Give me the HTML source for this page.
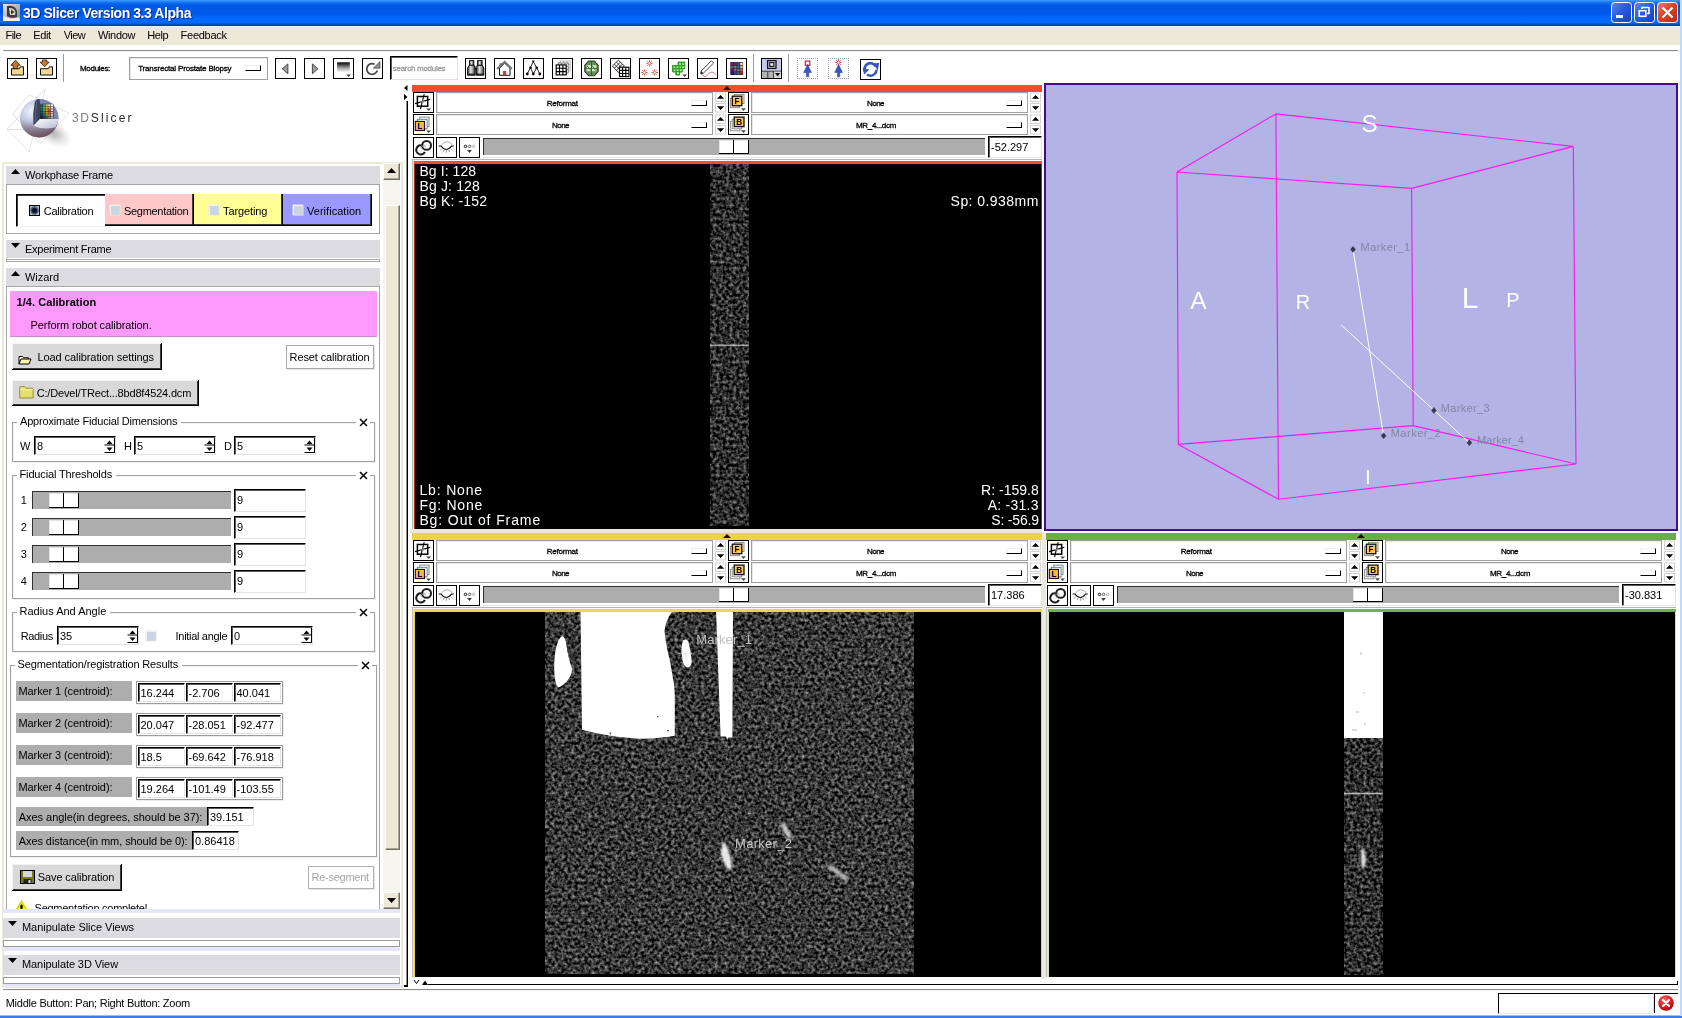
<!DOCTYPE html>
<html><head><meta charset="utf-8"><title>3D Slicer Version 3.3 Alpha</title>
<style>
html,body{margin:0;padding:0;}
body{width:1682px;height:1018px;overflow:hidden;background:#fff;position:relative;font-family:"Liberation Sans", sans-serif;font-size:11px;}
#root{position:absolute;left:0;top:0;width:1682px;height:1018px;overflow:hidden;will-change:transform;}
.a{position:absolute;box-sizing:content-box;}
.t{position:absolute;white-space:pre;font-family:"Liberation Sans", sans-serif;}
.s8{-webkit-text-stroke:0.3px currentColor;}
svg{display:block;overflow:visible}
#title{background:linear-gradient(to bottom,#3f9dff 0px,#2f8efa 1px,#1474ef 2.5px,#0463e5 4px,#0058e6 6px,#0056e5 13px,#005cf0 15px,#0265fa 17px,#066aff 19px,#0566fb 23px,#0055dd 24px,#003db2 25px,#0037a6 26px);}
.b21{width:19px;height:19px;border:1px solid #000;background:#fff;}
.sk{border:1px solid;border-color:#000 #e2e2e2 #e2e2e2 #000;box-shadow:inset 1px 1px 0 #5a5a5a;}
.rb{border-right:1px solid #000;border-bottom:1px solid #000;padding:0 1px 1px 0;box-shadow:inset 1px 1px 0 #f4f4f4, inset -1px -1px 0 #3c3c3c;}
.fs{border:1px solid #a2a2a2;box-shadow:1px 1px 0 #f0f0f0, inset 1px 1px 0 #f4f4f4;}
.om{background:#fff;border:1px solid #a0a0a0;box-shadow:inset 1px 1px 0 #e8e8e8;}
.sbb{width:15px;height:15px;background:#ece9d8;border:1px solid;border-color:#fff #716f64 #716f64 #fff;box-shadow:inset -1px -1px 0 #aca899;}
</style></head>
<body>
<div id="root">
<div class="a" id="title" style="left:0;top:0;width:1680px;height:26px"></div>
<svg class="a" style="left:3px;top:4px" width="17" height="17" viewBox="0 0 17 17"><defs><linearGradient id="ti" x1="0" y1="0" x2="1" y2="1"><stop offset="0" stop-color="#e8e8e8"/><stop offset="1" stop-color="#8a8478"/></linearGradient></defs><rect x="0" y="0" width="17" height="17" fill="url(#ti)"/><path d="M4 2 Q12 1 14 7 L14 13 Q8 15 4 12 Z" fill="#3a3a44"/><path d="M6 4 Q11 3.5 12.5 8 L12 11 L7 11 Z" fill="#d9d4c4"/><path d="M8 5.5 L11.5 8 L8 10.5 Z" fill="#403a30"/><path d="M0 11 Q6 17 16 13 L17 17 H0 Z" fill="#f4f2ea"/></svg>
<span id="t1" class="t" style="left:23.0px;top:4.35px;font-size:14px;line-height:18px;font-weight:bold;color:#fff;letter-spacing:-0.445px;text-shadow:1px 1px 0 #0a2a8a;">3D Slicer Version 3.3 Alpha</span>
<div class="a" style="left:1611px;top:2px;width:19px;height:19px;border:1px solid #fff;border-radius:3.5px;background:linear-gradient(135deg,#5a86ee 0%,#2c5be0 45%,#1a3fc0 100%)"></div>
<div class="a" style="left:1634px;top:2px;width:19px;height:19px;border:1px solid #fff;border-radius:3.5px;background:linear-gradient(135deg,#5a86ee 0%,#2c5be0 45%,#1a3fc0 100%)"></div>
<div class="a" style="left:1657px;top:2px;width:19px;height:19px;border:1px solid #fff;border-radius:3.5px;background:linear-gradient(135deg,#f08060 0%,#d8432a 45%,#b82a10 100%)"></div>
<svg class="a" style="left:1611px;top:2px;" width="21" height="21" viewBox="0 0 21 21"><rect x="5" y="13" width="7" height="3" fill="#fff"/></svg>
<svg class="a" style="left:1634px;top:2px;" width="21" height="21" viewBox="0 0 21 21"><path d="M8 7 V5.5 H15 V11.5 H13" stroke="#fff" stroke-width="1.6" fill="none"/><rect x="5.2" y="8.7" width="6.6" height="5.6" stroke="#fff" stroke-width="1.6" fill="none"/></svg>
<svg class="a" style="left:1657px;top:2px;" width="21" height="21" viewBox="0 0 21 21"><path d="M5.5 5.5 L15.5 15.5 M15.5 5.5 L5.5 15.5" stroke="#fff" stroke-width="2.2" fill="none"/></svg>
<div class="a" style="left:1680px;top:0px;width:2px;height:1018px;background:#c2d9f8"></div>
<div class="a" style="left:0px;top:1016px;width:1682px;height:2px;background:#3b7ce6"></div>
<div class="a" style="left:0px;top:1015px;width:1680px;height:1px;background:#9dbdf0"></div>
<div class="a" style="left:0px;top:26px;width:1680px;height:19px;background:#ece9d8"></div>
<div class="a" style="left:0px;top:26px;width:1680px;height:1px;background:#f3f4f8"></div>
<span id="t2" class="t" style="left:5.5px;top:28.29px;font-size:11px;line-height:15px;letter-spacing:-0.534px;">File</span>
<span id="t3" class="t" style="left:33.3px;top:28.29px;font-size:11px;line-height:15px;letter-spacing:-0.367px;">Edit</span>
<span id="t4" class="t" style="left:63.8px;top:28.29px;font-size:11px;line-height:15px;letter-spacing:-0.564px;">View</span>
<span id="t5" class="t" style="left:97.9px;top:28.29px;font-size:11px;line-height:15px;letter-spacing:-0.304px;">Window</span>
<span id="t6" class="t" style="left:147.3px;top:28.29px;font-size:11px;line-height:15px;letter-spacing:-0.456px;">Help</span>
<span id="t7" class="t" style="left:180.6px;top:28.29px;font-size:11px;line-height:15px;letter-spacing:-0.277px;">Feedback</span>
<div class="a" style="left:3px;top:50px;width:1675px;height:1px;background:#8a8a8a"></div>
<div class="a" style="left:3px;top:51px;width:1675px;height:1px;background:#f4f4f4"></div>
<div class="a b21" style="left:7px;top:58px;"><svg width="19" height="19" viewBox="0 0 19 19"><path d="M3.5 9.7 H11.3 L12.3 7.8 H15.5 V16 H3.5 Z" fill="#f1d88e" stroke="#111" stroke-width="1"/><path d="M7.5 1.2 L12.2 6.2 H9.7 V9.6 H5.3 V6.2 H2.8 Z" fill="#c8782e" stroke="#2a1600" stroke-width=".8"/></svg></div>
<div class="a b21" style="left:36px;top:58px;"><svg width="19" height="19" viewBox="0 0 19 19"><path d="M3.5 9.7 H11.3 L12.3 7.8 H15.5 V16 H3.5 Z" fill="#f1d88e" stroke="#111" stroke-width="1"/><path d="M5.4 1 H9.8 V3.2 H12.1 L7.6 7.8 L3.2 3.2 H5.4 Z" fill="#d8782a" stroke="#2a1600" stroke-width=".8"/></svg></div>
<div class="a" style="left:63px;top:54px;width:1px;height:28px;background:#9a9a9a"></div>
<span id="t8" class="t s8" style="left:80.0px;top:62.93px;font-size:8px;line-height:12px;letter-spacing:-0.309px;">Modules:</span>
<div class="a om" style="left:129px;top:57px;width:137px;height:21px"></div>
<span id="t9" class="t s8" style="left:138.2px;top:62.93px;font-size:8px;line-height:12px;letter-spacing:-0.177px;">Transrectal Prostate Biopsy</span>
<div class="a" style="left:245px;top:65px;width:14px;height:4px;background:#fff;border-right:1px solid #000;border-bottom:1px solid #000;border-top:1px solid #eee;border-left:1px solid #eee"></div>
<div class="a b21" style="left:275px;top:58px;"><svg width="19" height="19" viewBox="0 0 19 19"><path d="M11.9 4.9 V14.7 L6.2 9.8 Z" fill="#9c9c9c" stroke="#3c3c3c" stroke-width=".9"/></svg></div>
<div class="a b21" style="left:304px;top:58px;"><svg width="19" height="19" viewBox="0 0 19 19"><path d="M7.4 4.9 V14.7 L12.9 9.8 Z" fill="#9c9c9c" stroke="#3c3c3c" stroke-width=".9"/></svg></div>
<div class="a b21" style="left:333px;top:58px;"><svg width="19" height="19" viewBox="0 0 19 19"><defs><linearGradient id="gh" x1="0" y1="0" x2="0" y2="1"><stop offset="0" stop-color="#000"/><stop offset=".18" stop-color="#333"/><stop offset=".6" stop-color="#aaa"/><stop offset="1" stop-color="#fcfcfc"/></linearGradient></defs><rect x="3.1" y="3.3" width="12.7" height="9.9" fill="url(#gh)"/><path d="M12.2 15.4 H17 L14.6 18 Z" fill="#444"/></svg></div>
<div class="a b21" style="left:362px;top:58px;"><svg width="19" height="19" viewBox="0 0 19 19"><path d="M14.3 11.6 A5.4 5.4 0 1 1 11.6 5.2" fill="none" stroke="#4a4a4a" stroke-width="1.7"/><path d="M10.3 9.2 L17 2.5 V9.2 Z" fill="#8e8e8e" stroke="#444" stroke-width=".7"/></svg></div>
<div class="a sk" style="left:390px;top:56px;width:66px;height:22px;background:#fff"></div>
<span id="t10" class="t s8" style="left:392.8px;top:62.93px;font-size:8px;line-height:12px;color:#9a9a9a;letter-spacing:-0.285px;">search modules</span>
<div class="a b21" style="left:465px;top:58px;"><svg width="19" height="19" viewBox="0 0 19 19"><defs><linearGradient id="gb" x1="0" y1="0" x2="1" y2="0"><stop offset="0" stop-color="#333"/><stop offset=".4" stop-color="#e2e2e2"/><stop offset=".7" stop-color="#999"/><stop offset="1" stop-color="#2a2a2a"/></linearGradient></defs><rect x="3.5" y="1.6" width="4.3" height="4.7" fill="url(#gb)" stroke="#000" stroke-width=".9"/><rect x="11.6" y="1.6" width="4.5" height="4.7" fill="url(#gb)" stroke="#000" stroke-width=".9"/><path d="M3.2 6.3 H8.1 L9.2 9 V16.2 H1.6 V9 Z" fill="url(#gb)" stroke="#000" stroke-width=".9"/><path d="M11.3 6.3 H16.4 L17.8 9 V16.2 H10.4 V9 Z" fill="url(#gb)" stroke="#000" stroke-width=".9"/><rect x="8.6" y="7.2" width="2.4" height="3.6" fill="#111"/><circle cx="9.8" cy="8" r=".8" fill="#ccc"/><rect x="1.6" y="14.6" width="7.6" height="1.6" fill="#222"/><rect x="10.4" y="14.6" width="7.4" height="1.6" fill="#222"/></svg></div>
<div class="a b21" style="left:494px;top:58px;"><svg width="19" height="19" viewBox="0 0 19 19"><rect x="4.5" y="4.4" width="2.4" height="3.4" fill="#666"/><path d="M4.5 9 V16.3 H15 V9 L9.7 4.2 Z" fill="#fff" stroke="#111" stroke-width="1"/><path d="M2.1 10.1 L9.6 3 L16.9 10.1" fill="none" stroke="#747474" stroke-width="2.1"/><rect x="7.9" y="12" width="3.3" height="4.3" fill="#b8483a"/></svg></div>
<div class="a b21" style="left:523px;top:58px;"><svg width="19" height="19" viewBox="0 0 19 19"><path d="M9.3 2.5 L3.3 14.9 M9.3 2.5 L15.8 14.9 M6.5 8.7 L9.3 14.9 M12.7 8.7 L9.3 14.9" fill="none" stroke="#000" stroke-width=".85"/><g fill="#1c0404"><path d="M7.9 1.6 H10.7 L9.3 3.9 Z"/><circle cx="6.5" cy="8.7" r="1.3"/><circle cx="12.7" cy="8.7" r="1.3"/><circle cx="3.3" cy="15" r="1.4"/><circle cx="9.3" cy="15" r="1.4"/><circle cx="15.8" cy="15" r="1.4"/></g></svg></div>
<div class="a b21" style="left:552px;top:58px;"><svg width="19" height="19" viewBox="0 0 19 19"><g fill="none" stroke="#a8a8a8" stroke-width=".8"><rect x="7.2" y="2" width="10" height="10"/><path d="M10.5 2 V12 M13.9 2 V12 M7.2 5.3 H17.2 M7.2 8.7 H17.2"/></g><g fill="#fff" stroke="#6e6e6e" stroke-width=".9"><rect x="5.2" y="4" width="10" height="10"/></g><path d="M8.5 4 V14 M11.9 4 V14 M5.2 7.3 H15.2 M5.2 10.7 H15.2" stroke="#6e6e6e" stroke-width=".8"/><g fill="#fff" stroke="#000" stroke-width="1.15"><rect x="3.2" y="5.9" width="10" height="10"/><path d="M6.5 5.9 V15.9 M9.9 5.9 V15.9 M3.2 9.2 H13.2 M3.2 12.6 H13.2"/></g></svg></div>
<div class="a b21" style="left:581px;top:58px;"><svg width="19" height="19" viewBox="0 0 19 19"><path d="M6.6 2 H12.3 L16.1 6.2 V12.6 L12.3 16.8 H6.6 L2.8 12.6 V6.2 Z" fill="#6c8a62" stroke="#24401e" stroke-width="1.1"/><rect x="4.6" y="6.2" width="4.5" height="6" fill="#cdeec2"/><rect x="9.9" y="6.2" width="4.5" height="6" fill="#cdeec2"/><path d="M9.5 2 V16.8 M2.8 9.4 H16.1 M5 6.7 L9 11.7 M10 6.7 L14 11.7" fill="none" stroke="#2c5424" stroke-width=".8"/></svg></div>
<div class="a b21" style="left:610px;top:58px;"><svg width="19" height="19" viewBox="0 0 19 19"><path d="M7.4 1.1 L13.3 7 L7.4 13.5 L1.4 7 Z" fill="#fff" stroke="#000" stroke-width=".8"/><path d="M5.4 3.1 L11.3 9.2 M3.4 5.1 L9.4 11.3 M9.4 3.1 L3.4 9.2 M11.4 5 L5.4 11.3" stroke="#000" stroke-width=".7"/><g fill="#fff" stroke="#000" stroke-width="1.15"><rect x="8.5" y="8.2" width="9.4" height="9.4"/><path d="M11.6 8.2 V17.6 M14.8 8.2 V17.6 M8.5 11.3 H17.9 M8.5 14.5 H17.9"/></g></svg></div>
<div class="a b21" style="left:639px;top:58px;"><svg width="19" height="19" viewBox="0 0 19 19"><path d="M6.2 4.4 H8.5 M10.5 4.4 H12.8 M9.5 1.1 V3.4 M9.5 5.4 V7.7 M7.2 2.1 L8.8 3.7 M10.2 5.1 L11.8 6.7 M11.8 2.1 L10.2 3.7 M8.8 5.1 L7.2 6.7" stroke="#c8402e" stroke-width="0.8" fill="none"/><path d="M1.1 13.5 H3.4 M5.4 13.5 H7.7 M4.4 10.2 V12.5 M4.4 14.5 V16.8 M2.1 11.2 L3.7 12.8 M5.1 14.2 L6.7 15.8 M6.7 11.2 L5.1 12.8 M3.7 14.2 L2.1 15.8" stroke="#c8402e" stroke-width="0.8" fill="none"/><path d="M11.4 13.5 H13.7 M15.7 13.5 H18.0 M14.7 10.2 V12.5 M14.7 14.5 V16.8 M12.4 11.2 L14.0 12.8 M15.4 14.2 L17.0 15.8 M17.0 11.2 L15.4 12.8 M14.0 14.2 L12.4 15.8" stroke="#c8402e" stroke-width="0.8" fill="none"/></svg></div>
<div class="a b21" style="left:668px;top:58px;"><svg width="19" height="19" viewBox="0 0 19 19"><path d="M9 3 H15.6 V9.5 H13 V13 H10.4 V16 H6.8 V12.8 H3.4 V6.4 H9 Z" fill="#4cb83e" stroke="#2a8a22" stroke-width=".8"/><rect x="9.6" y="3.6" width="3.1" height="3.1" fill="#9cf08c" stroke="#2f9a26" stroke-width="1"/><rect x="12.6" y="3.6" width="3.1" height="3.1" fill="#9cf08c" stroke="#2f9a26" stroke-width="1"/><rect x="4" y="6.8" width="3.1" height="3.1" fill="#9cf08c" stroke="#2f9a26" stroke-width="1"/><rect x="7" y="6.8" width="3.1" height="3.1" fill="#9cf08c" stroke="#2f9a26" stroke-width="1"/><rect x="10" y="6.8" width="3.1" height="3.1" fill="#9cf08c" stroke="#2f9a26" stroke-width="1"/><rect x="12.6" y="6.6" width="3.1" height="3.1" fill="#9cf08c" stroke="#2f9a26" stroke-width="1"/><rect x="4.2" y="9.7" width="3.1" height="3.1" fill="#9cf08c" stroke="#2f9a26" stroke-width="1"/><rect x="7.2" y="9.7" width="3.1" height="3.1" fill="#9cf08c" stroke="#2f9a26" stroke-width="1"/><rect x="10.2" y="9.7" width="3.1" height="3.1" fill="#9cf08c" stroke="#2f9a26" stroke-width="1"/><rect x="7.4" y="12.6" width="3.1" height="3.1" fill="#9cf08c" stroke="#2f9a26" stroke-width="1"/><path d="M13.4 15.4 H18.1 L15.7 18 Z" fill="#4a3c5c"/></svg></div>
<div class="a b21" style="left:697px;top:58px;"><svg width="19" height="19" viewBox="0 0 19 19"><path d="M3.2 12 L13.4 1.8 L15.6 4 L5.4 14.2 L2.6 14.8 Z" fill="#fff" stroke="#333" stroke-width=".9"/><path d="M2.6 14.8 L3.2 12 L5.4 14.2 Z" fill="#222"/><path d="M3.4 14.6 C5.5 18.5 8 18 10 15.4 S14.5 12 17.7 15.4" fill="none" stroke="#c4485a" stroke-width=".8"/></svg></div>
<div class="a b21" style="left:726px;top:58px;"><svg width="19" height="19" viewBox="0 0 19 19"><rect x="3.3" y="3.1" width="12.8" height="12.9" fill="#2a1e3c"/><rect x="3.9" y="3.7" width="2.5" height="2.5" fill="#7a2030"/><rect x="7.0" y="3.7" width="2.5" height="2.5" fill="#483070"/><rect x="10.1" y="3.7" width="2.5" height="2.5" fill="#5a4a8a"/><rect x="13.2" y="3.7" width="2.5" height="2.5" fill="#e8e4a0"/><rect x="3.9" y="6.8" width="2.5" height="2.5" fill="#a04088"/><rect x="7.0" y="6.8" width="2.5" height="2.5" fill="#40a050"/><rect x="10.1" y="6.8" width="2.5" height="2.5" fill="#3a60c0"/><rect x="13.2" y="6.8" width="2.5" height="2.5" fill="#d8b870"/><rect x="3.9" y="9.9" width="2.5" height="2.5" fill="#3a2a90"/><rect x="7.0" y="9.9" width="2.5" height="2.5" fill="#b84890"/><rect x="10.1" y="9.9" width="2.5" height="2.5" fill="#389858"/><rect x="13.2" y="9.9" width="2.5" height="2.5" fill="#c86858"/><rect x="3.9" y="13.0" width="2.5" height="2.5" fill="#282060"/><rect x="7.0" y="13.0" width="2.5" height="2.5" fill="#4838a0"/><rect x="10.1" y="13.0" width="2.5" height="2.5" fill="#2a7040"/><rect x="13.2" y="13.0" width="2.5" height="2.5" fill="#b02838"/></svg></div>
<div class="a" style="left:753px;top:54px;width:1px;height:28px;background:#9a9a9a"></div>
<div class="a b21" style="left:761px;top:58px;background:#c4c8e6;"><svg width="19" height="19" viewBox="0 0 19 19"><rect x="0" y="0" width="19" height="19" fill="#c8c8ea"/><rect x="5.6" y="1.6" width="8.4" height="7.8" fill="#d6d6f0" stroke="#111" stroke-width="1.3"/><rect x="7.7" y="3.6" width="4.2" height="3.8" fill="#e6e6f6" stroke="#111" stroke-width="1.1"/><rect x="0" y="12.2" width="19" height="6.8" fill="#b4b4b4"/><path d="M0 12.2 H19 M5.8 12.2 V19 M11.6 12.2 V19" stroke="#3c3c3c" stroke-width="1"/><rect x="12.1" y="12.7" width="6.9" height="6.3" fill="#d8d8d8"/><path d="M13 14 H18.2 L15.6 17.4 Z" fill="#111"/></svg></div>
<div class="a" style="left:788px;top:54px;width:1px;height:28px;background:#9a9a9a"></div>
<div class="a b21" style="left:797px;top:58px;border:1px dotted #98a0b4;"><svg width="19" height="19" viewBox="0 0 19 19"><rect x="7.3" y="2.1" width="4.6" height="4.2" fill="#fff" stroke="#a8202e" stroke-width="1.1"/><path d="M9.6 5.4 L13.5 13.5 H10.8 V17.8 H8.4 V13.5 H5.7 Z" fill="#3a56c4" stroke="#2a3c9c" stroke-width=".5"/></svg></div>
<div class="a b21" style="left:828px;top:58px;border:1px dotted #98a0b4;"><svg width="19" height="19" viewBox="0 0 19 19"><path d="M6.4 3.6 H8.6 M10.6 3.6 H12.8 M9.6 0.4 V2.6 M9.6 4.6 V6.8 M7.3 1.3 L8.9 2.9 M10.3 4.3 L11.9 5.9 M11.9 1.3 L10.3 2.9 M8.9 4.3 L7.3 5.9" stroke="#d02828" stroke-width="0.9" fill="none"/><path d="M9.6 5.4 L13.5 13.5 H10.8 V17.8 H8.4 V13.5 H5.7 Z" fill="#3a56c4" stroke="#2a3c9c" stroke-width=".5"/></svg></div>
<div class="a b21" style="left:860px;top:59px;"><svg width="19" height="19" viewBox="0 0 19 19"><path d="M4.2 11.6 A5.8 5.8 0 0 1 14.6 6.4" fill="none" stroke="#3558be" stroke-width="2.8"/><path d="M11.6 3.2 L18.2 3 L16.8 10.2 Z" fill="#3558be"/><path d="M15.4 9.6 A5.8 5.8 0 0 1 6 14.4" fill="none" stroke="#3558be" stroke-width="2.4"/><path d="M1.6 8.2 L8.4 9.6 L3.2 14.6 Z" fill="#3558be"/></svg></div>
<svg class="a" style="left:0px;top:84px" width="140" height="74" viewBox="0 0 140 74"><defs><radialGradient id="lg1" cx=".3" cy=".32" r=".8"><stop offset="0" stop-color="#f2f4fb"/><stop offset=".35" stop-color="#c2cae4"/><stop offset=".7" stop-color="#8c94b8"/><stop offset="1" stop-color="#6e5e76"/></radialGradient><linearGradient id="lg4" x1="0" y1="0" x2="0" y2="1"><stop offset=".55" stop-color="#805858" stop-opacity="0"/><stop offset="1" stop-color="#6a4444" stop-opacity=".75"/></linearGradient><radialGradient id="lg2" cx=".5" cy=".5" r=".5"><stop offset="0" stop-color="#000" stop-opacity=".30"/><stop offset=".6" stop-color="#000" stop-opacity=".10"/><stop offset="1" stop-color="#000" stop-opacity="0"/></radialGradient><linearGradient id="lg3" x1="0" y1="0" x2="1" y2="1"><stop offset="0" stop-color="#ffffff"/><stop offset="1" stop-color="#b4bcd4"/></linearGradient></defs><ellipse cx="53" cy="49" rx="20" ry="12" fill="url(#lg2)" transform="rotate(30 53 49)"/><path d="M7 45.5 L45.4 4.6 L29 67.5 Z M12.5 30 L29 11 L69 29 L40.5 60 Z M7 45.5 H58" fill="none" stroke="#d4d4d8" stroke-width=".7"/><circle cx="39.2" cy="34.2" r="19.2" fill="url(#lg1)"/><circle cx="39.2" cy="34.2" r="19.2" fill="url(#lg4)"/><path d="M38.5 15 A19.2 19.2 0 0 1 58.4 34.6 L53.4 35 L40 35 L40 20 Z" fill="#7d86ae"/><path d="M39.6 15 Q36 14.6 34.6 19 Q32.4 30 33.4 41.8 L40 35.2 L40 19.5 Z" fill="#3a445e"/><path d="M36.8 17.5 Q35 29 35.8 38.4" fill="none" stroke="#586482" stroke-width="1.1"/><path d="M33.4 41.8 L40 35 H58.4 Q58 39.5 55.6 43.2 Q44 46.5 33.4 41.8 Z" fill="url(#lg3)"/><rect x="40" y="19.8" width="13.4" height="15.2" fill="#16202c"/><rect x="40.4" y="20.2" width="2.2" height="2.05" fill="#3a6a78"/><rect x="43.0" y="20.2" width="2.2" height="2.05" fill="#5a9a70"/><rect x="45.6" y="20.2" width="2.2" height="2.05" fill="#c8d080"/><rect x="48.2" y="20.2" width="2.2" height="2.05" fill="#f0e8d0"/><rect x="50.8" y="20.2" width="2.2" height="2.05" fill="#ffffff"/><rect x="40.4" y="22.6" width="2.2" height="2.05" fill="#2a8a70"/><rect x="43.0" y="22.6" width="2.2" height="2.05" fill="#78b848"/><rect x="45.6" y="22.6" width="2.2" height="2.05" fill="#e8c838"/><rect x="48.2" y="22.6" width="2.2" height="2.05" fill="#f0a840"/><rect x="50.8" y="22.6" width="2.2" height="2.05" fill="#f4e8e0"/><rect x="40.4" y="25.1" width="2.2" height="2.05" fill="#1a7858"/><rect x="43.0" y="25.1" width="2.2" height="2.05" fill="#58a838"/><rect x="45.6" y="25.1" width="2.2" height="2.05" fill="#f09020"/><rect x="48.2" y="25.1" width="2.2" height="2.05" fill="#e85028"/><rect x="50.8" y="25.1" width="2.2" height="2.05" fill="#f0c8c0"/><rect x="40.4" y="27.6" width="2.2" height="2.05" fill="#205860"/><rect x="43.0" y="27.6" width="2.2" height="2.05" fill="#388848"/><rect x="45.6" y="27.6" width="2.2" height="2.05" fill="#d8a828"/><rect x="48.2" y="27.6" width="2.2" height="2.05" fill="#e06030"/><rect x="50.8" y="27.6" width="2.2" height="2.05" fill="#e8b0a8"/><rect x="40.4" y="30.0" width="2.2" height="2.05" fill="#283858"/><rect x="43.0" y="30.0" width="2.2" height="2.05" fill="#2a6858"/><rect x="45.6" y="30.0" width="2.2" height="2.05" fill="#88a048"/><rect x="48.2" y="30.0" width="2.2" height="2.05" fill="#c87848"/><rect x="50.8" y="30.0" width="2.2" height="2.05" fill="#d8b8b8"/><rect x="40.4" y="32.5" width="2.2" height="2.05" fill="#202848"/><rect x="43.0" y="32.5" width="2.2" height="2.05" fill="#284858"/><rect x="45.6" y="32.5" width="2.2" height="2.05" fill="#507858"/><rect x="48.2" y="32.5" width="2.2" height="2.05" fill="#a08868"/><rect x="50.8" y="32.5" width="2.2" height="2.05" fill="#c8c0c8"/></svg>
<span id="t11" class="t" style="left:72.0px;top:110.24px;font-size:12px;line-height:16px;color:#7c7c7c;letter-spacing:1.628px;">3D</span>
<span id="t12" class="t" style="left:90.8px;top:110.24px;font-size:12px;line-height:16px;color:#2a2a2a;letter-spacing:2.131px;">Slicer</span>
<div class="a" style="left:2px;top:162px;width:401px;height:826px;border:2px solid #ece9d8;box-sizing:border-box"></div>
<div class="a" style="left:6px;top:166px;width:374px;height:18px;background:#dcdce0"></div>
<svg class="a" style="left:11px;top:169px;" width="9" height="5" viewBox="0 0 9 5"><path d="M0 5 L4.5 0 L9 5 Z" fill="#000"/></svg>
<span id="t13" class="t" style="left:25.0px;top:168.19px;font-size:11px;line-height:15px;letter-spacing:-0.152px;">Workphase Frame</span>
<div class="a" style="left:6px;top:184px;width:374px;height:50px;border:1px solid #a6a6a6;box-sizing:border-box"></div>
<div class="a" style="left:16px;top:194px;width:87px;height:30px;background:#fff;border-top:1px solid #000;border-left:1px solid #000;border-right:1px solid #f0f0f0;border-bottom:1px solid #f0f0f0;padding:1px 0 0 1px;box-shadow:inset 1px 1px 0 #3c3c3c;box-sizing:content-box"></div>
<div class="a" style="left:29px;top:205px;width:9px;height:9px;border:1px solid #000;background:radial-gradient(circle,#000 0,#10203a 35%,#9db0c8 75%,#dfe6ee 100%)"></div>
<span id="t14" class="t" style="left:43.8px;top:204.39px;font-size:11px;line-height:15px;letter-spacing:-0.281px;">Calibration</span>
<div class="a" style="left:105px;top:194px;width:88px;height:31px;background:#ffc8c8;border-right:1px solid #000;border-bottom:1px solid #000;box-shadow:inset -1px -1px 0 #3c3c3c"></div>
<div class="a" style="left:109.5px;top:204.5px;width:8px;height:8px;border:1px solid #f2f2f2;border-right-color:#d8d8d8;border-bottom-color:#d8d8d8;background:#c9d5e3;box-shadow:0 0 0 0.5px #e8e8e8"></div>
<span id="t15" class="t" style="left:124.0px;top:203.79px;font-size:11px;line-height:15px;letter-spacing:-0.299px;">Segmentation</span>
<div class="a" style="left:194px;top:194px;width:88px;height:31px;background:#ffff96;border-right:1px solid #000;border-bottom:1px solid #000;box-shadow:inset -1px -1px 0 #3c3c3c"></div>
<div class="a" style="left:208.5px;top:204.5px;width:8px;height:8px;border:1px solid #f2f2f2;border-right-color:#d8d8d8;border-bottom-color:#d8d8d8;background:#c9d5e3;box-shadow:0 0 0 0.5px #e8e8e8"></div>
<span id="t16" class="t" style="left:223.0px;top:203.79px;font-size:11px;line-height:15px;letter-spacing:-0.096px;">Targeting</span>
<div class="a" style="left:283px;top:194px;width:88px;height:31px;background:#9999ff;border-right:1px solid #000;border-bottom:1px solid #000;box-shadow:inset -1px -1px 0 #3c3c3c"></div>
<div class="a" style="left:292.5px;top:204.5px;width:8px;height:8px;border:1px solid #f2f2f2;border-right-color:#d8d8d8;border-bottom-color:#d8d8d8;background:#c9d5e3;box-shadow:0 0 0 0.5px #e8e8e8"></div>
<span id="t17" class="t" style="left:307.0px;top:203.79px;font-size:11px;line-height:15px;letter-spacing:0.032px;">Verification</span>
<div class="a" style="left:6px;top:240px;width:374px;height:18px;background:#dcdce0"></div>
<svg class="a" style="left:11px;top:243px;" width="9" height="5" viewBox="0 0 9 5"><path d="M0 0 L9 0 L4.5 5 Z" fill="#000"/></svg>
<span id="t18" class="t" style="left:25.0px;top:242.19px;font-size:11px;line-height:15px;letter-spacing:-0.262px;">Experiment Frame</span>
<div class="a" style="left:6px;top:259px;width:374px;height:3px;border:1px solid #a6a6a6;box-sizing:border-box"></div>
<div class="a" style="left:6px;top:268px;width:374px;height:18px;background:#dcdce0"></div>
<svg class="a" style="left:11px;top:271px;" width="9" height="5" viewBox="0 0 9 5"><path d="M0 5 L4.5 0 L9 5 Z" fill="#000"/></svg>
<span id="t19" class="t" style="left:25.0px;top:270.19px;font-size:11px;line-height:15px;letter-spacing:-0.039px;">Wizard</span>
<div class="a" style="left:6px;top:286px;width:374px;height:630px;border:1px solid #a6a6a6;border-bottom:none;box-sizing:border-box"></div>
<div class="a" style="left:10px;top:291px;width:367px;height:46px;background:#ff99ff;border-bottom:1px solid #c88cc8;box-sizing:border-box"></div>
<span id="t20" class="t" style="left:16.6px;top:295.39px;font-size:11px;line-height:15px;font-weight:bold;letter-spacing:0.046px;">1/4. Calibration</span>
<span id="t21" class="t" style="left:30.6px;top:318.39px;font-size:11px;line-height:15px;letter-spacing:-0.096px;">Perform robot calibration.</span>
<div class="a rb" style="left:12px;top:343px;width:148px;height:25px;background:#d9d9d9"></div>
<svg class="a" style="left:18px;top:354px;" width="14" height="11" viewBox="0 0 14 11"><path d="M1 10 V2.5 H4.5 L5.5 3.8 H10.5 V5" fill="#fffbe0" stroke="#000" stroke-width="1"/><path d="M1 10 L3 5 H13 L11 10 Z" fill="#fff3b0" stroke="#000" stroke-width="1"/></svg>
<span id="t22" class="t" style="left:37.5px;top:350.19px;font-size:11px;line-height:15px;letter-spacing:-0.086px;">Load calibration settings</span>
<div class="a" style="left:286px;top:345px;width:88px;height:24px;background:#fff;border:1px solid #a8a8a8;box-sizing:border-box;box-shadow:1px 1px 0 #e6e6e6"></div>
<span id="t23" class="t" style="left:289.6px;top:350.19px;font-size:11px;line-height:15px;letter-spacing:-0.114px;">Reset calibration</span>
<div class="a rb" style="left:12px;top:380px;width:185px;height:24px;background:#d9d9d9"></div>
<svg class="a" style="left:19px;top:385px;" width="15" height="14" viewBox="0 0 15 14"><path d="M0.8 13 V2.5 Q0.8 1.5 1.8 1.5 H5.5 L7 3.2 H13.2 Q14.2 3.2 14.2 4.2 V13 Z" fill="#e6e070" stroke="#8a8438" stroke-width=".9"/><path d="M1.2 4.6 H13.8" stroke="#f4f0a8" stroke-width="1"/></svg>
<span id="t24" class="t" style="left:36.7px;top:386.19px;font-size:11px;line-height:15px;letter-spacing:-0.169px;">C:/Devel/TRect...8bd8f4524.dcm</span>
<div class="a fs" style="left:12px;top:422px;width:361px;height:38px"></div>
<div class="a" style="left:17px;top:416px;width:164.3px;height:12px;background:#fff"></div>
<span id="t25" class="t" style="left:20.0px;top:414.29px;font-size:11px;line-height:15px;letter-spacing:-0.191px;">Approximate Fiducial Dimensions</span>
<div class="a" style="left:356px;top:417px;width:14px;height:11px;background:#fff"></div>
<svg class="a" style="left:359px;top:418px;" width="9" height="9" viewBox="0 0 9 9"><path d="M1 1 L8 8 M8 1 L1 8" stroke="#000" stroke-width="1.5" fill="none"/></svg>
<span id="t26" class="t" style="left:20.0px;top:439.09px;font-size:11px;line-height:15px;letter-spacing:0.409px;">W</span>
<div class="a sk" style="left:34px;top:436px;width:80px;height:17px;background:#fff"></div>
<span id="t27" class="t" style="left:37.0px;top:439.09px;font-size:11px;line-height:15px;">8</span>
<svg class="a" style="left:104px;top:438px" width="11" height="15" viewBox="0 0 11 15"><path d="M0.5 7.0 H11 M10.5 0 V15" stroke="#000" fill="none"/><path d="M0.5 14.5 H11" stroke="#000" fill="none"/><path d="M2.5 6 L5.5 2.5 L8.5 6 Z M2.5 9.5 L5.5 13.0 L8.5 9.5 Z" fill="#000"/></svg>
<span id="t28" class="t" style="left:123.9px;top:439.09px;font-size:11px;line-height:15px;letter-spacing:-1.653px;">H</span>
<div class="a sk" style="left:134px;top:436px;width:80px;height:17px;background:#fff"></div>
<span id="t29" class="t" style="left:137.0px;top:439.09px;font-size:11px;line-height:15px;">5</span>
<svg class="a" style="left:204px;top:438px" width="11" height="15" viewBox="0 0 11 15"><path d="M0.5 7.0 H11 M10.5 0 V15" stroke="#000" fill="none"/><path d="M0.5 14.5 H11" stroke="#000" fill="none"/><path d="M2.5 6 L5.5 2.5 L8.5 6 Z M2.5 9.5 L5.5 13.0 L8.5 9.5 Z" fill="#000"/></svg>
<span id="t30" class="t" style="left:224.0px;top:439.09px;font-size:11px;line-height:15px;letter-spacing:-1.953px;">D</span>
<div class="a sk" style="left:234px;top:436px;width:80px;height:17px;background:#fff"></div>
<span id="t31" class="t" style="left:237.0px;top:439.09px;font-size:11px;line-height:15px;">5</span>
<svg class="a" style="left:304px;top:438px" width="11" height="15" viewBox="0 0 11 15"><path d="M0.5 7.0 H11 M10.5 0 V15" stroke="#000" fill="none"/><path d="M0.5 14.5 H11" stroke="#000" fill="none"/><path d="M2.5 6 L5.5 2.5 L8.5 6 Z M2.5 9.5 L5.5 13.0 L8.5 9.5 Z" fill="#000"/></svg>
<div class="a fs" style="left:12px;top:475px;width:361px;height:122px"></div>
<div class="a" style="left:16.5px;top:469px;width:99.5px;height:12px;background:#fff"></div>
<span id="t32" class="t" style="left:19.5px;top:467.29px;font-size:11px;line-height:15px;letter-spacing:-0.141px;">Fiducial Thresholds</span>
<div class="a" style="left:356px;top:470px;width:14px;height:11px;background:#fff"></div>
<svg class="a" style="left:359px;top:471px;" width="9" height="9" viewBox="0 0 9 9"><path d="M1 1 L8 8 M8 1 L1 8" stroke="#000" stroke-width="1.5" fill="none"/></svg>
<span id="t33" class="t" style="left:20.8px;top:492.69px;font-size:11px;line-height:15px;">1</span>
<div class="a" style="left:32px;top:491px;width:198px;height:17px;background:#adadad;border-top:1px solid #303030;border-left:1px solid #303030"></div>
<div class="a" style="left:49px;top:493px;width:29px;height:14px;background:#fff;border-right:1px solid #000;border-bottom:1px solid #000;box-shadow:inset 1px 1px 0 #e4e4e4"></div>
<div class="a" style="left:63px;top:493px;width:1px;height:15px;background:#000"></div>
<div class="a sk" style="left:234px;top:489px;width:70px;height:21px;background:#fff"></div>
<span id="t34" class="t" style="left:237.0px;top:492.69px;font-size:11px;line-height:15px;">9</span>
<span id="t35" class="t" style="left:20.8px;top:519.69px;font-size:11px;line-height:15px;">2</span>
<div class="a" style="left:32px;top:518px;width:198px;height:17px;background:#adadad;border-top:1px solid #303030;border-left:1px solid #303030"></div>
<div class="a" style="left:49px;top:520px;width:29px;height:14px;background:#fff;border-right:1px solid #000;border-bottom:1px solid #000;box-shadow:inset 1px 1px 0 #e4e4e4"></div>
<div class="a" style="left:63px;top:520px;width:1px;height:15px;background:#000"></div>
<div class="a sk" style="left:234px;top:516px;width:70px;height:21px;background:#fff"></div>
<span id="t36" class="t" style="left:237.0px;top:519.69px;font-size:11px;line-height:15px;">9</span>
<span id="t37" class="t" style="left:20.8px;top:546.69px;font-size:11px;line-height:15px;">3</span>
<div class="a" style="left:32px;top:545px;width:198px;height:17px;background:#adadad;border-top:1px solid #303030;border-left:1px solid #303030"></div>
<div class="a" style="left:49px;top:547px;width:29px;height:14px;background:#fff;border-right:1px solid #000;border-bottom:1px solid #000;box-shadow:inset 1px 1px 0 #e4e4e4"></div>
<div class="a" style="left:63px;top:547px;width:1px;height:15px;background:#000"></div>
<div class="a sk" style="left:234px;top:543px;width:70px;height:21px;background:#fff"></div>
<span id="t38" class="t" style="left:237.0px;top:546.69px;font-size:11px;line-height:15px;">9</span>
<span id="t39" class="t" style="left:20.8px;top:573.69px;font-size:11px;line-height:15px;">4</span>
<div class="a" style="left:32px;top:572px;width:198px;height:17px;background:#adadad;border-top:1px solid #303030;border-left:1px solid #303030"></div>
<div class="a" style="left:49px;top:574px;width:29px;height:14px;background:#fff;border-right:1px solid #000;border-bottom:1px solid #000;box-shadow:inset 1px 1px 0 #e4e4e4"></div>
<div class="a" style="left:63px;top:574px;width:1px;height:15px;background:#000"></div>
<div class="a sk" style="left:234px;top:570px;width:70px;height:21px;background:#fff"></div>
<span id="t40" class="t" style="left:237.0px;top:573.69px;font-size:11px;line-height:15px;">9</span>
<div class="a fs" style="left:12px;top:612px;width:361px;height:38px"></div>
<div class="a" style="left:16.5px;top:606px;width:93.8px;height:12px;background:#fff"></div>
<span id="t41" class="t" style="left:19.5px;top:604.29px;font-size:11px;line-height:15px;letter-spacing:-0.004px;">Radius And Angle</span>
<div class="a" style="left:356px;top:607px;width:14px;height:11px;background:#fff"></div>
<svg class="a" style="left:359px;top:608px;" width="9" height="9" viewBox="0 0 9 9"><path d="M1 1 L8 8 M8 1 L1 8" stroke="#000" stroke-width="1.5" fill="none"/></svg>
<span id="t42" class="t" style="left:20.8px;top:629.29px;font-size:11px;line-height:15px;letter-spacing:-0.375px;">Radius</span>
<div class="a sk" style="left:57px;top:626px;width:80px;height:17px;background:#fff"></div>
<span id="t43" class="t" style="left:60.0px;top:629.29px;font-size:11px;line-height:15px;">35</span>
<svg class="a" style="left:127px;top:628px" width="11" height="15" viewBox="0 0 11 15"><path d="M0.5 7.0 H11 M10.5 0 V15" stroke="#000" fill="none"/><path d="M0.5 14.5 H11" stroke="#000" fill="none"/><path d="M2.5 6 L5.5 2.5 L8.5 6 Z M2.5 9.5 L5.5 13.0 L8.5 9.5 Z" fill="#000"/></svg>
<div class="a" style="left:145.5px;top:630.5px;width:8px;height:8px;border:1px solid #f2f2f2;border-right-color:#d8d8d8;border-bottom-color:#d8d8d8;background:#c9d5e3;box-shadow:0 0 0 0.5px #e8e8e8"></div>
<span id="t44" class="t" style="left:175.6px;top:629.29px;font-size:11px;line-height:15px;letter-spacing:-0.312px;">Initial angle</span>
<div class="a sk" style="left:231px;top:626px;width:80px;height:17px;background:#fff"></div>
<span id="t45" class="t" style="left:234.0px;top:629.29px;font-size:11px;line-height:15px;">0</span>
<svg class="a" style="left:301px;top:628px" width="11" height="15" viewBox="0 0 11 15"><path d="M0.5 7.0 H11 M10.5 0 V15" stroke="#000" fill="none"/><path d="M0.5 14.5 H11" stroke="#000" fill="none"/><path d="M2.5 6 L5.5 2.5 L8.5 6 Z M2.5 9.5 L5.5 13.0 L8.5 9.5 Z" fill="#000"/></svg>
<div class="a fs" style="left:10px;top:665px;width:365px;height:190px"></div>
<div class="a" style="left:14.600000000000001px;top:659px;width:167.4px;height:12px;background:#fff"></div>
<span id="t46" class="t" style="left:17.6px;top:657.29px;font-size:11px;line-height:15px;letter-spacing:-0.142px;">Segmentation/registration Results</span>
<div class="a" style="left:358px;top:660px;width:14px;height:11px;background:#fff"></div>
<svg class="a" style="left:361px;top:661px;" width="9" height="9" viewBox="0 0 9 9"><path d="M1 1 L8 8 M8 1 L1 8" stroke="#000" stroke-width="1.5" fill="none"/></svg>
<div class="a" style="left:16px;top:681px;width:116px;height:20px;background:#adadad"></div>
<span id="t47" class="t" style="left:18.5px;top:684.09px;font-size:11px;line-height:15px;letter-spacing:-0.104px;">Marker 1 (centroid):</span>
<div class="a" style="left:136px;top:681px;width:147px;height:23px;border:1px solid #9c9c9c;box-sizing:border-box;background:#fff;box-shadow:1px 1px 0 #ececec"></div>
<div class="a sk" style="left:138px;top:683px;width:45px;height:17px;background:#fff"></div>
<span id="t48" class="t" style="left:140.5px;top:685.89px;font-size:11px;line-height:15px;">16.244</span>
<div class="a sk" style="left:186px;top:683px;width:45px;height:17px;background:#fff"></div>
<span id="t49" class="t" style="left:188.5px;top:685.89px;font-size:11px;line-height:15px;">-2.706</span>
<div class="a sk" style="left:234px;top:683px;width:45px;height:17px;background:#fff"></div>
<span id="t50" class="t" style="left:236.5px;top:685.89px;font-size:11px;line-height:15px;">40.041</span>
<div class="a" style="left:16px;top:713px;width:116px;height:20px;background:#adadad"></div>
<span id="t51" class="t" style="left:18.5px;top:716.09px;font-size:11px;line-height:15px;letter-spacing:-0.104px;">Marker 2 (centroid):</span>
<div class="a" style="left:136px;top:713px;width:147px;height:23px;border:1px solid #9c9c9c;box-sizing:border-box;background:#fff;box-shadow:1px 1px 0 #ececec"></div>
<div class="a sk" style="left:138px;top:715px;width:45px;height:17px;background:#fff"></div>
<span id="t52" class="t" style="left:140.5px;top:717.89px;font-size:11px;line-height:15px;">20.047</span>
<div class="a sk" style="left:186px;top:715px;width:45px;height:17px;background:#fff"></div>
<span id="t53" class="t" style="left:188.5px;top:717.89px;font-size:11px;line-height:15px;">-28.051</span>
<div class="a sk" style="left:234px;top:715px;width:45px;height:17px;background:#fff"></div>
<span id="t54" class="t" style="left:236.5px;top:717.89px;font-size:11px;line-height:15px;">-92.477</span>
<div class="a" style="left:16px;top:745px;width:116px;height:20px;background:#adadad"></div>
<span id="t55" class="t" style="left:18.5px;top:748.09px;font-size:11px;line-height:15px;letter-spacing:-0.104px;">Marker 3 (centroid):</span>
<div class="a" style="left:136px;top:745px;width:147px;height:23px;border:1px solid #9c9c9c;box-sizing:border-box;background:#fff;box-shadow:1px 1px 0 #ececec"></div>
<div class="a sk" style="left:138px;top:747px;width:45px;height:17px;background:#fff"></div>
<span id="t56" class="t" style="left:140.5px;top:749.89px;font-size:11px;line-height:15px;">18.5</span>
<div class="a sk" style="left:186px;top:747px;width:45px;height:17px;background:#fff"></div>
<span id="t57" class="t" style="left:188.5px;top:749.89px;font-size:11px;line-height:15px;">-69.642</span>
<div class="a sk" style="left:234px;top:747px;width:45px;height:17px;background:#fff"></div>
<span id="t58" class="t" style="left:236.5px;top:749.89px;font-size:11px;line-height:15px;">-76.918</span>
<div class="a" style="left:16px;top:777px;width:116px;height:20px;background:#adadad"></div>
<span id="t59" class="t" style="left:18.5px;top:780.09px;font-size:11px;line-height:15px;letter-spacing:-0.104px;">Marker 4 (centroid):</span>
<div class="a" style="left:136px;top:777px;width:147px;height:23px;border:1px solid #9c9c9c;box-sizing:border-box;background:#fff;box-shadow:1px 1px 0 #ececec"></div>
<div class="a sk" style="left:138px;top:779px;width:45px;height:17px;background:#fff"></div>
<span id="t60" class="t" style="left:140.5px;top:781.89px;font-size:11px;line-height:15px;">19.264</span>
<div class="a sk" style="left:186px;top:779px;width:45px;height:17px;background:#fff"></div>
<span id="t61" class="t" style="left:188.5px;top:781.89px;font-size:11px;line-height:15px;">-101.49</span>
<div class="a sk" style="left:234px;top:779px;width:45px;height:17px;background:#fff"></div>
<span id="t62" class="t" style="left:236.5px;top:781.89px;font-size:11px;line-height:15px;">-103.55</span>
<div class="a" style="left:16px;top:807px;width:191px;height:19px;background:#adadad"></div>
<span id="t63" class="t" style="left:18.8px;top:810.49px;font-size:11px;line-height:15px;letter-spacing:-0.046px;">Axes angle(in degrees, should be 37):</span>
<div class="a sk" style="left:207px;top:807px;width:45px;height:17px;background:#fff"></div>
<span id="t64" class="t" style="left:210.0px;top:810.49px;font-size:11px;line-height:15px;">39.151</span>
<div class="a" style="left:16px;top:831px;width:176px;height:19px;background:#adadad"></div>
<span id="t65" class="t" style="left:18.8px;top:834.49px;font-size:11px;line-height:15px;letter-spacing:-0.089px;">Axes distance(in mm, should be 0):</span>
<div class="a sk" style="left:192px;top:831px;width:45px;height:17px;background:#fff"></div>
<span id="t66" class="t" style="left:195.0px;top:834.49px;font-size:11px;line-height:15px;">0.86418</span>
<div class="a rb" style="left:12px;top:864px;width:108px;height:25px;background:#d9d9d9"></div>
<svg class="a" style="left:20px;top:870px;" width="15" height="14" viewBox="0 0 15 14"><rect x="0.5" y="0.5" width="14" height="13" fill="#7a7a14" stroke="#000" stroke-width="1"/><rect x="3" y="1" width="9" height="6" fill="#d6d6de"/><rect x="3.5" y="9" width="8" height="4.5" fill="#222"/><rect x="8.5" y="10" width="2" height="3" fill="#ddd"/></svg>
<span id="t67" class="t" style="left:37.8px;top:870.39px;font-size:11px;line-height:15px;letter-spacing:-0.111px;">Save calibration</span>
<div class="a" style="left:308px;top:866px;width:66px;height:23px;background:#fff;border:1px solid #b0b0b0;box-sizing:border-box;box-shadow:1px 1px 0 #e6e6e6"></div>
<span id="t68" class="t" style="left:311.6px;top:870.39px;font-size:11px;line-height:15px;color:#a6a6a6;letter-spacing:-0.272px;">Re-segment</span>
<svg class="a" style="left:15px;top:899.5px;" width="13" height="12" viewBox="0 0 13 12"><path d="M6.5 1 L12.6 11.6 H0.4 Z" fill="#fbf41c" stroke="#d8cc00" stroke-width="1.2" stroke-linejoin="round"/><ellipse cx="6.5" cy="7" rx="1.3" ry="2.4" fill="#000"/></svg>
<span id="t69" class="t" style="left:34.6px;top:901.19px;font-size:11px;line-height:15px;letter-spacing:-0.265px;">Segmentation complete!</span>
<div class="a" style="left:383px;top:163px;width:17px;height:746px;background:#f7f6ee"></div>
<div class="a sbb" style="left:383px;top:163px"></div>
<svg class="a" style="left:387px;top:168px;" width="9" height="5" viewBox="0 0 9 5"><path d="M0 5 L4.5 0 L9 5 Z" fill="#000"/></svg>
<div class="a" style="left:385px;top:205px;width:13px;height:643px;background:#ece9d8;border-left:1px solid #fff;border-top:1px solid #fff;border-right:1px solid #716f64;border-bottom:1px solid #716f64;box-shadow:inset -1px -1px 0 #aca899"></div>
<div class="a sbb" style="left:383px;top:892px"></div>
<svg class="a" style="left:387px;top:898px;" width="9" height="5" viewBox="0 0 9 5"><path d="M0 0 L9 0 L4.5 5 Z" fill="#000"/></svg>
<div class="a" style="left:3px;top:909px;width:397px;height:9px;background:#fff"></div>
<div class="a" style="left:3px;top:909px;width:397px;height:4px;background:#e6e6fa"></div>
<div class="a" style="left:3px;top:918px;width:397px;height:20px;background:#dcdce0"></div>
<svg class="a" style="left:8px;top:921px;" width="9" height="5" viewBox="0 0 9 5"><path d="M0 0 L9 0 L4.5 5 Z" fill="#000"/></svg>
<span id="t70" class="t" style="left:22.0px;top:920.19px;font-size:11px;line-height:15px;letter-spacing:-0.042px;">Manipulate Slice Views</span>
<div class="a" style="left:3px;top:940px;width:397px;height:7px;background:#fff;border:1px solid #9c9c9c;box-sizing:border-box"></div>
<div class="a" style="left:3px;top:947px;width:397px;height:4px;background:#e6e6fa"></div>
<div class="a" style="left:3px;top:955px;width:397px;height:20px;background:#dcdce0"></div>
<svg class="a" style="left:8px;top:958px;" width="9" height="5" viewBox="0 0 9 5"><path d="M0 0 L9 0 L4.5 5 Z" fill="#000"/></svg>
<span id="t71" class="t" style="left:22.0px;top:957.19px;font-size:11px;line-height:15px;letter-spacing:-0.091px;">Manipulate 3D View</span>
<div class="a" style="left:3px;top:977px;width:397px;height:7px;background:#fff;border:1px solid #9c9c9c;box-sizing:border-box"></div>
<div class="a" style="left:3px;top:984px;width:397px;height:3px;background:#e6e6fa"></div>
<svg class="a" style="left:404px;top:85px;" width="4" height="6" viewBox="0 0 4 6"><path d="M3.5 0 V6 L0 3 Z" fill="#000"/></svg>
<svg class="a" style="left:404px;top:94px;" width="4" height="6" viewBox="0 0 4 6"><path d="M0 0 V6 L3.5 3 Z" fill="#000"/></svg>
<div class="a" style="left:406px;top:101px;width:1px;height:886px;background:#8c8c8c"></div>
<div class="a" style="left:407px;top:101px;width:1px;height:886px;background:#000"></div>
<div class="a" style="left:404px;top:985px;width:3px;height:2px;background:#000"></div>
<div class="a" style="left:3px;top:989px;width:1675px;height:1px;background:#8a8a8a"></div>
<div class="a" style="left:3px;top:990px;width:1675px;height:1px;background:#f4f4f4"></div>
<span id="t72" class="t" style="left:5.7px;top:995.99px;font-size:11px;line-height:15px;letter-spacing:-0.251px;">Middle Button: Pan; Right Button: Zoom</span>
<div class="a" style="left:1498px;top:993px;width:154px;height:19px;background:#fff;border-top:1px solid #000;border-left:1px solid #000;border-right:1px solid #e8e8e8;border-bottom:1px solid #e8e8e8"></div>
<div class="a" style="left:1654px;top:993px;width:23px;height:19px;background:#fff;border-top:1px solid #000;border-left:1px solid #000"></div>
<svg class="a" style="left:1657px;top:994px;" width="18" height="18" viewBox="0 0 18 18"><defs><radialGradient id="ge" cx=".4" cy=".3" r=".8"><stop offset="0" stop-color="#f86060"/><stop offset=".6" stop-color="#d81818"/><stop offset="1" stop-color="#8a0808"/></radialGradient></defs><circle cx="9" cy="9" r="7.8" fill="url(#ge)"/><path d="M6 6 L12 12 M12 6 L6 12" stroke="#fff" stroke-width="2.2" stroke-linecap="round"/></svg>
<svg class="a" style="left:413px;top:979px;" width="16" height="7" viewBox="0 0 16 7"><path d="M1 1 L3.5 4.5 L6 1" stroke="#000" fill="none"/><path d="M9 6 L12 1.5 L15 6 Z" fill="#000"/></svg>
<div class="a" style="left:428px;top:984px;width:1250px;height:1px;background:#000"></div>
<div class="a" style="left:1677px;top:981px;width:1px;height:4px;background:#000"></div>
<div class="a" style="left:410px;top:529px;width:632px;height:4px;background:#ece6da"></div>
<div class="a" style="left:1042px;top:533px;width:4px;height:446px;background:#eae9dc"></div>
<div class="a" style="left:412px;top:85px;width:630px;height:7px;background:#f24a33"></div>
<svg class="a" style="left:723.3px;top:85.8px;" width="8" height="4" viewBox="0 0 8 4"><path d="M0 4 L4 0 L8 4 Z" fill="#2a0000"/></svg>
<div class="a b21" style="left:413px;top:92px;"><svg width="19" height="19" viewBox="0 0 19 19"><rect x="3.4" y="3.5" width="10.3" height="9.7" fill="none" stroke="#000" stroke-width="1.5"/><path d="M10.2 1.2 L6.5 16.1 M1.1 10.6 L16.3 6.3" stroke="#000" stroke-width="1.1"/><path d="M9 5 V10.2 M5.2 8.6 H12" fill="none" stroke="#9a9a9a" stroke-width=".8"/><path d="M12.3 15.4 H17.1 L14.7 18 Z" fill="#4a4a4a"/></svg></div>
<div class="a om" style="left:436px;top:92px;width:275px;height:19px"></div>
<span id="t73" class="t s8" style="left:546.8px;top:97.93px;font-size:8px;line-height:12px;letter-spacing:-0.238px;">Reformat</span>
<div class="a" style="left:691px;top:100px;width:14px;height:4px;background:#fff;border-right:1px solid #000;border-bottom:1px solid #000;border-top:1px solid #f0f0f0;border-left:1px solid #f0f0f0"></div>
<svg class="a" style="left:715px;top:92px;" width="11" height="21" viewBox="0 0 11 21"><rect x="0.5" y="1" width="10" height="8.5" fill="#fff" stroke="#d2d2d2"/><rect x="0.5" y="11.5" width="10" height="8.5" fill="#fff" stroke="#d2d2d2"/><path d="M2 6.8 L5.6 3 L9.2 6.8 Z M2 14.3 L9.2 14.3 L5.6 18 Z" fill="#000"/></svg>
<div class="a b21" style="left:728px;top:92px;"><svg width="19" height="19" viewBox="0 0 19 19"><rect x="5.4" y="1.3" width="9.6" height="9.2" fill="#faecc4" stroke="#777" stroke-width=".8"/><rect x="1.3" y="5.3" width="9.3" height="9.4" fill="#faecc4" stroke="#777" stroke-width=".8"/><rect x="3.3" y="3.2" width="9.5" height="9.5" fill="#f8c264" stroke="#111" stroke-width="1.3"/><text x="5.6" y="11.1" font-family="Liberation Sans, sans-serif" font-weight="bold" font-size="8.2" fill="#000">F</text><path d="M12 15.3 H16.9 L14.5 18 Z" fill="#4a4a4a"/></svg></div>
<div class="a om" style="left:751px;top:92px;width:275px;height:19px"></div>
<span id="t74" class="t s8" style="left:867.0px;top:97.93px;font-size:8px;line-height:12px;letter-spacing:-0.531px;">None</span>
<div class="a" style="left:1006px;top:100px;width:14px;height:4px;background:#fff;border-right:1px solid #000;border-bottom:1px solid #000;border-top:1px solid #f0f0f0;border-left:1px solid #f0f0f0"></div>
<svg class="a" style="left:1030px;top:92px;" width="11" height="21" viewBox="0 0 11 21"><rect x="0.5" y="1" width="10" height="8.5" fill="#fff" stroke="#d2d2d2"/><rect x="0.5" y="11.5" width="10" height="8.5" fill="#fff" stroke="#d2d2d2"/><path d="M2 6.8 L5.6 3 L9.2 6.8 Z M2 14.3 L9.2 14.3 L5.6 18 Z" fill="#000"/></svg>
<div class="a b21" style="left:413px;top:114px;"><svg width="19" height="19" viewBox="0 0 19 19"><rect x="5.8" y="2.1" width="9.2" height="9.4" fill="#fff" stroke="#6a8070" stroke-width=".9"/><rect x="3.3" y="4.3" width="9.8" height="9.6" fill="#fff" stroke="#6a6a9c" stroke-width=".9"/><rect x="1.3" y="6.4" width="9.2" height="9.1" fill="#f8b832" stroke="#111" stroke-width="1.1"/><text x="3.6" y="14.1" font-family="Liberation Sans, sans-serif" font-weight="bold" font-size="8.2" fill="#000">L</text><path d="M12.3 15.4 H17.1 L14.7 18 Z" fill="#4a4a4a"/></svg></div>
<div class="a om" style="left:436px;top:114px;width:275px;height:19px"></div>
<span id="t75" class="t s8" style="left:552.0px;top:119.93px;font-size:8px;line-height:12px;letter-spacing:-0.531px;">None</span>
<div class="a" style="left:691px;top:122px;width:14px;height:4px;background:#fff;border-right:1px solid #000;border-bottom:1px solid #000;border-top:1px solid #f0f0f0;border-left:1px solid #f0f0f0"></div>
<svg class="a" style="left:715px;top:114px;" width="11" height="21" viewBox="0 0 11 21"><rect x="0.5" y="1" width="10" height="8.5" fill="#fff" stroke="#d2d2d2"/><rect x="0.5" y="11.5" width="10" height="8.5" fill="#fff" stroke="#d2d2d2"/><path d="M2 6.8 L5.6 3 L9.2 6.8 Z M2 14.3 L9.2 14.3 L5.6 18 Z" fill="#000"/></svg>
<div class="a b21" style="left:728px;top:114px;"><svg width="19" height="19" viewBox="0 0 19 19"><rect x="1.3" y="6.3" width="9.6" height="9.5" fill="#fff" stroke="#777" stroke-width=".8"/><rect x="3.2" y="4.3" width="9.6" height="9.5" fill="#fff" stroke="#777" stroke-width=".8"/><rect x="5.2" y="2.1" width="9.8" height="9.5" fill="#f8c264" stroke="#111" stroke-width="1.3"/><text x="7.2" y="10" font-family="Liberation Sans, sans-serif" font-weight="bold" font-size="8.2" fill="#000">B</text><path d="M12 15.3 H16.9 L14.5 18 Z" fill="#4a4a4a"/></svg></div>
<div class="a om" style="left:751px;top:114px;width:275px;height:19px"></div>
<span id="t76" class="t s8" style="left:856.0px;top:119.93px;font-size:8px;line-height:12px;letter-spacing:-0.312px;">MR_4...dcm</span>
<div class="a" style="left:1006px;top:122px;width:14px;height:4px;background:#fff;border-right:1px solid #000;border-bottom:1px solid #000;border-top:1px solid #f0f0f0;border-left:1px solid #f0f0f0"></div>
<svg class="a" style="left:1030px;top:114px;" width="11" height="21" viewBox="0 0 11 21"><rect x="0.5" y="1" width="10" height="8.5" fill="#fff" stroke="#d2d2d2"/><rect x="0.5" y="11.5" width="10" height="8.5" fill="#fff" stroke="#d2d2d2"/><path d="M2 6.8 L5.6 3 L9.2 6.8 Z M2 14.3 L9.2 14.3 L5.6 18 Z" fill="#000"/></svg>
<div class="a b21" style="left:413px;top:137px;"><svg width="19" height="19" viewBox="0 0 19 19"><path d="M8.5 7.5 A4.6 4.6 0 1 0 10.9 14.1" fill="none" stroke="#1c1c1c" stroke-width="2.1"/><circle cx="12.6" cy="7.4" r="4.4" fill="none" stroke="#1c1c1c" stroke-width="2"/><path d="M7.6 7.2 L10.6 10.6 M6.4 8.6 L9.4 12 M8.9 6 L11.8 9.4" stroke="#8a8a8a" stroke-width=".9"/></svg></div>
<div class="a b21" style="left:436px;top:137px;"><svg width="19" height="19" viewBox="0 0 19 19"><path d="M4.3 7.4 Q9 0.2 15.5 6.8" fill="none" stroke="#a0a0a0" stroke-width=".9"/><path d="M1.6 8 H4 Q9.3 15 14.6 8 H16.8" fill="none" stroke="#111" stroke-width="1.2"/><path d="M4.8 10.6 L3.2 12.6 M7 11.9 L6.2 14.2 M9.4 12.4 L9.4 14.8 M11.8 11.9 L12.6 14.2 M13.9 10.6 L15.4 12.4" stroke="#8c8c8c" stroke-width=".9"/></svg></div>
<div class="a b21" style="left:459px;top:137px;"><svg width="19" height="19" viewBox="0 0 19 19"><circle cx="5.5" cy="8.4" r="1.25" fill="#fff" stroke="#111" stroke-width="1"/><circle cx="9.6" cy="8.4" r="1.25" fill="#fff" stroke="#5a5a5a" stroke-width="1"/><circle cx="13.6" cy="8.4" r="1.25" fill="#fff" stroke="#b4b4b4" stroke-width="1"/><path d="M7 12.1 H11.9 L9.45 14.9 Z" fill="#3c3c3c"/></svg></div>
<div class="a" style="left:483px;top:138px;width:501px;height:16px;background:#adadad;border-top:1px solid #303030;border-left:1px solid #303030"></div>
<div class="a" style="left:719px;top:140px;width:29px;height:13px;background:#fff;border-right:1px solid #000;border-bottom:1px solid #000;box-shadow:inset 1px 1px 0 #e4e4e4"></div>
<div class="a" style="left:733px;top:140px;width:1px;height:14px;background:#000"></div>
<div class="a" style="left:483px;top:157px;width:503px;height:1px;background:#e4e4e4"></div>
<div class="a sk" style="left:988px;top:136px;width:52px;height:20px;background:#fff"></div>
<span id="t77" class="t" style="left:991.0px;top:140.19px;font-size:11px;line-height:15px;">-52.297</span>
<div class="a" style="left:412px;top:159px;width:630px;height:370px;background:#e4e0d4"></div>
<div class="a" style="left:412px;top:159px;width:630px;height:1px;background:#b4b4ae"></div>
<div class="a" style="left:412px;top:159px;width:1px;height:370px;background:#c0c0b8"></div>
<div class="a" style="left:413px;top:160px;width:629px;height:1px;background:#fbfbf6"></div>
<div class="a" style="left:414px;top:161px;width:628px;height:368px;background:#9a2c1e"></div>
<div class="a" style="left:414px;top:161px;width:628px;height:3px;background:#f24a33"></div>
<div class="a" style="left:415px;top:164px;width:626px;height:365px;background:#000"></div>
<div class="a" style="left:412px;top:533px;width:630px;height:7px;background:#ecd440"></div>
<svg class="a" style="left:723.3px;top:533.8px;" width="8" height="4" viewBox="0 0 8 4"><path d="M0 4 L4 0 L8 4 Z" fill="#2a0000"/></svg>
<div class="a b21" style="left:413px;top:540px;"><svg width="19" height="19" viewBox="0 0 19 19"><rect x="3.4" y="3.5" width="10.3" height="9.7" fill="none" stroke="#000" stroke-width="1.5"/><path d="M10.2 1.2 L6.5 16.1 M1.1 10.6 L16.3 6.3" stroke="#000" stroke-width="1.1"/><path d="M9 5 V10.2 M5.2 8.6 H12" fill="none" stroke="#9a9a9a" stroke-width=".8"/><path d="M12.3 15.4 H17.1 L14.7 18 Z" fill="#4a4a4a"/></svg></div>
<div class="a om" style="left:436px;top:540px;width:275px;height:19px"></div>
<span id="t78" class="t s8" style="left:546.8px;top:545.93px;font-size:8px;line-height:12px;letter-spacing:-0.238px;">Reformat</span>
<div class="a" style="left:691px;top:548px;width:14px;height:4px;background:#fff;border-right:1px solid #000;border-bottom:1px solid #000;border-top:1px solid #f0f0f0;border-left:1px solid #f0f0f0"></div>
<svg class="a" style="left:715px;top:540px;" width="11" height="21" viewBox="0 0 11 21"><rect x="0.5" y="1" width="10" height="8.5" fill="#fff" stroke="#d2d2d2"/><rect x="0.5" y="11.5" width="10" height="8.5" fill="#fff" stroke="#d2d2d2"/><path d="M2 6.8 L5.6 3 L9.2 6.8 Z M2 14.3 L9.2 14.3 L5.6 18 Z" fill="#000"/></svg>
<div class="a b21" style="left:728px;top:540px;"><svg width="19" height="19" viewBox="0 0 19 19"><rect x="5.4" y="1.3" width="9.6" height="9.2" fill="#faecc4" stroke="#777" stroke-width=".8"/><rect x="1.3" y="5.3" width="9.3" height="9.4" fill="#faecc4" stroke="#777" stroke-width=".8"/><rect x="3.3" y="3.2" width="9.5" height="9.5" fill="#f8c264" stroke="#111" stroke-width="1.3"/><text x="5.6" y="11.1" font-family="Liberation Sans, sans-serif" font-weight="bold" font-size="8.2" fill="#000">F</text><path d="M12 15.3 H16.9 L14.5 18 Z" fill="#4a4a4a"/></svg></div>
<div class="a om" style="left:751px;top:540px;width:275px;height:19px"></div>
<span id="t79" class="t s8" style="left:867.0px;top:545.93px;font-size:8px;line-height:12px;letter-spacing:-0.531px;">None</span>
<div class="a" style="left:1006px;top:548px;width:14px;height:4px;background:#fff;border-right:1px solid #000;border-bottom:1px solid #000;border-top:1px solid #f0f0f0;border-left:1px solid #f0f0f0"></div>
<svg class="a" style="left:1030px;top:540px;" width="11" height="21" viewBox="0 0 11 21"><rect x="0.5" y="1" width="10" height="8.5" fill="#fff" stroke="#d2d2d2"/><rect x="0.5" y="11.5" width="10" height="8.5" fill="#fff" stroke="#d2d2d2"/><path d="M2 6.8 L5.6 3 L9.2 6.8 Z M2 14.3 L9.2 14.3 L5.6 18 Z" fill="#000"/></svg>
<div class="a b21" style="left:413px;top:562px;"><svg width="19" height="19" viewBox="0 0 19 19"><rect x="5.8" y="2.1" width="9.2" height="9.4" fill="#fff" stroke="#6a8070" stroke-width=".9"/><rect x="3.3" y="4.3" width="9.8" height="9.6" fill="#fff" stroke="#6a6a9c" stroke-width=".9"/><rect x="1.3" y="6.4" width="9.2" height="9.1" fill="#f8b832" stroke="#111" stroke-width="1.1"/><text x="3.6" y="14.1" font-family="Liberation Sans, sans-serif" font-weight="bold" font-size="8.2" fill="#000">L</text><path d="M12.3 15.4 H17.1 L14.7 18 Z" fill="#4a4a4a"/></svg></div>
<div class="a om" style="left:436px;top:562px;width:275px;height:19px"></div>
<span id="t80" class="t s8" style="left:552.0px;top:567.93px;font-size:8px;line-height:12px;letter-spacing:-0.531px;">None</span>
<div class="a" style="left:691px;top:570px;width:14px;height:4px;background:#fff;border-right:1px solid #000;border-bottom:1px solid #000;border-top:1px solid #f0f0f0;border-left:1px solid #f0f0f0"></div>
<svg class="a" style="left:715px;top:562px;" width="11" height="21" viewBox="0 0 11 21"><rect x="0.5" y="1" width="10" height="8.5" fill="#fff" stroke="#d2d2d2"/><rect x="0.5" y="11.5" width="10" height="8.5" fill="#fff" stroke="#d2d2d2"/><path d="M2 6.8 L5.6 3 L9.2 6.8 Z M2 14.3 L9.2 14.3 L5.6 18 Z" fill="#000"/></svg>
<div class="a b21" style="left:728px;top:562px;"><svg width="19" height="19" viewBox="0 0 19 19"><rect x="1.3" y="6.3" width="9.6" height="9.5" fill="#fff" stroke="#777" stroke-width=".8"/><rect x="3.2" y="4.3" width="9.6" height="9.5" fill="#fff" stroke="#777" stroke-width=".8"/><rect x="5.2" y="2.1" width="9.8" height="9.5" fill="#f8c264" stroke="#111" stroke-width="1.3"/><text x="7.2" y="10" font-family="Liberation Sans, sans-serif" font-weight="bold" font-size="8.2" fill="#000">B</text><path d="M12 15.3 H16.9 L14.5 18 Z" fill="#4a4a4a"/></svg></div>
<div class="a om" style="left:751px;top:562px;width:275px;height:19px"></div>
<span id="t81" class="t s8" style="left:856.0px;top:567.93px;font-size:8px;line-height:12px;letter-spacing:-0.312px;">MR_4...dcm</span>
<div class="a" style="left:1006px;top:570px;width:14px;height:4px;background:#fff;border-right:1px solid #000;border-bottom:1px solid #000;border-top:1px solid #f0f0f0;border-left:1px solid #f0f0f0"></div>
<svg class="a" style="left:1030px;top:562px;" width="11" height="21" viewBox="0 0 11 21"><rect x="0.5" y="1" width="10" height="8.5" fill="#fff" stroke="#d2d2d2"/><rect x="0.5" y="11.5" width="10" height="8.5" fill="#fff" stroke="#d2d2d2"/><path d="M2 6.8 L5.6 3 L9.2 6.8 Z M2 14.3 L9.2 14.3 L5.6 18 Z" fill="#000"/></svg>
<div class="a b21" style="left:413px;top:585px;"><svg width="19" height="19" viewBox="0 0 19 19"><path d="M8.5 7.5 A4.6 4.6 0 1 0 10.9 14.1" fill="none" stroke="#1c1c1c" stroke-width="2.1"/><circle cx="12.6" cy="7.4" r="4.4" fill="none" stroke="#1c1c1c" stroke-width="2"/><path d="M7.6 7.2 L10.6 10.6 M6.4 8.6 L9.4 12 M8.9 6 L11.8 9.4" stroke="#8a8a8a" stroke-width=".9"/></svg></div>
<div class="a b21" style="left:436px;top:585px;"><svg width="19" height="19" viewBox="0 0 19 19"><path d="M4.3 7.4 Q9 0.2 15.5 6.8" fill="none" stroke="#a0a0a0" stroke-width=".9"/><path d="M1.6 8 H4 Q9.3 15 14.6 8 H16.8" fill="none" stroke="#111" stroke-width="1.2"/><path d="M4.8 10.6 L3.2 12.6 M7 11.9 L6.2 14.2 M9.4 12.4 L9.4 14.8 M11.8 11.9 L12.6 14.2 M13.9 10.6 L15.4 12.4" stroke="#8c8c8c" stroke-width=".9"/></svg></div>
<div class="a b21" style="left:459px;top:585px;"><svg width="19" height="19" viewBox="0 0 19 19"><circle cx="5.5" cy="8.4" r="1.25" fill="#fff" stroke="#111" stroke-width="1"/><circle cx="9.6" cy="8.4" r="1.25" fill="#fff" stroke="#5a5a5a" stroke-width="1"/><circle cx="13.6" cy="8.4" r="1.25" fill="#fff" stroke="#b4b4b4" stroke-width="1"/><path d="M7 12.1 H11.9 L9.45 14.9 Z" fill="#3c3c3c"/></svg></div>
<div class="a" style="left:483px;top:586px;width:501px;height:16px;background:#adadad;border-top:1px solid #303030;border-left:1px solid #303030"></div>
<div class="a" style="left:719px;top:588px;width:29px;height:13px;background:#fff;border-right:1px solid #000;border-bottom:1px solid #000;box-shadow:inset 1px 1px 0 #e4e4e4"></div>
<div class="a" style="left:733px;top:588px;width:1px;height:14px;background:#000"></div>
<div class="a" style="left:483px;top:605px;width:503px;height:1px;background:#e4e4e4"></div>
<div class="a sk" style="left:988px;top:584px;width:52px;height:20px;background:#fff"></div>
<span id="t82" class="t" style="left:991.0px;top:588.19px;font-size:11px;line-height:15px;">17.386</span>
<div class="a" style="left:412px;top:607px;width:630px;height:370px;background:#e4e0d4"></div>
<div class="a" style="left:412px;top:607px;width:630px;height:1px;background:#b4b4ae"></div>
<div class="a" style="left:412px;top:607px;width:1px;height:370px;background:#c0c0b8"></div>
<div class="a" style="left:413px;top:608px;width:629px;height:1px;background:#fbfbf6"></div>
<div class="a" style="left:414px;top:609px;width:628px;height:368px;background:#edd54c"></div>
<div class="a" style="left:414px;top:609px;width:628px;height:3px;background:#edd54c"></div>
<div class="a" style="left:415px;top:612px;width:626px;height:365px;background:#000"></div>
<div class="a" style="left:1046px;top:533px;width:630px;height:7px;background:#6cac4a"></div>
<svg class="a" style="left:1357.3px;top:533.8px;" width="8" height="4" viewBox="0 0 8 4"><path d="M0 4 L4 0 L8 4 Z" fill="#2a0000"/></svg>
<div class="a b21" style="left:1047px;top:540px;"><svg width="19" height="19" viewBox="0 0 19 19"><rect x="3.4" y="3.5" width="10.3" height="9.7" fill="none" stroke="#000" stroke-width="1.5"/><path d="M10.2 1.2 L6.5 16.1 M1.1 10.6 L16.3 6.3" stroke="#000" stroke-width="1.1"/><path d="M9 5 V10.2 M5.2 8.6 H12" fill="none" stroke="#9a9a9a" stroke-width=".8"/><path d="M12.3 15.4 H17.1 L14.7 18 Z" fill="#4a4a4a"/></svg></div>
<div class="a om" style="left:1070px;top:540px;width:275px;height:19px"></div>
<span id="t83" class="t s8" style="left:1180.8px;top:545.93px;font-size:8px;line-height:12px;letter-spacing:-0.238px;">Reformat</span>
<div class="a" style="left:1325px;top:548px;width:14px;height:4px;background:#fff;border-right:1px solid #000;border-bottom:1px solid #000;border-top:1px solid #f0f0f0;border-left:1px solid #f0f0f0"></div>
<svg class="a" style="left:1349px;top:540px;" width="11" height="21" viewBox="0 0 11 21"><rect x="0.5" y="1" width="10" height="8.5" fill="#fff" stroke="#d2d2d2"/><rect x="0.5" y="11.5" width="10" height="8.5" fill="#fff" stroke="#d2d2d2"/><path d="M2 6.8 L5.6 3 L9.2 6.8 Z M2 14.3 L9.2 14.3 L5.6 18 Z" fill="#000"/></svg>
<div class="a b21" style="left:1362px;top:540px;"><svg width="19" height="19" viewBox="0 0 19 19"><rect x="5.4" y="1.3" width="9.6" height="9.2" fill="#faecc4" stroke="#777" stroke-width=".8"/><rect x="1.3" y="5.3" width="9.3" height="9.4" fill="#faecc4" stroke="#777" stroke-width=".8"/><rect x="3.3" y="3.2" width="9.5" height="9.5" fill="#f8c264" stroke="#111" stroke-width="1.3"/><text x="5.6" y="11.1" font-family="Liberation Sans, sans-serif" font-weight="bold" font-size="8.2" fill="#000">F</text><path d="M12 15.3 H16.9 L14.5 18 Z" fill="#4a4a4a"/></svg></div>
<div class="a om" style="left:1385px;top:540px;width:275px;height:19px"></div>
<span id="t84" class="t s8" style="left:1501.0px;top:545.93px;font-size:8px;line-height:12px;letter-spacing:-0.531px;">None</span>
<div class="a" style="left:1640px;top:548px;width:14px;height:4px;background:#fff;border-right:1px solid #000;border-bottom:1px solid #000;border-top:1px solid #f0f0f0;border-left:1px solid #f0f0f0"></div>
<svg class="a" style="left:1664px;top:540px;" width="11" height="21" viewBox="0 0 11 21"><rect x="0.5" y="1" width="10" height="8.5" fill="#fff" stroke="#d2d2d2"/><rect x="0.5" y="11.5" width="10" height="8.5" fill="#fff" stroke="#d2d2d2"/><path d="M2 6.8 L5.6 3 L9.2 6.8 Z M2 14.3 L9.2 14.3 L5.6 18 Z" fill="#000"/></svg>
<div class="a b21" style="left:1047px;top:562px;"><svg width="19" height="19" viewBox="0 0 19 19"><rect x="5.8" y="2.1" width="9.2" height="9.4" fill="#fff" stroke="#6a8070" stroke-width=".9"/><rect x="3.3" y="4.3" width="9.8" height="9.6" fill="#fff" stroke="#6a6a9c" stroke-width=".9"/><rect x="1.3" y="6.4" width="9.2" height="9.1" fill="#f8b832" stroke="#111" stroke-width="1.1"/><text x="3.6" y="14.1" font-family="Liberation Sans, sans-serif" font-weight="bold" font-size="8.2" fill="#000">L</text><path d="M12.3 15.4 H17.1 L14.7 18 Z" fill="#4a4a4a"/></svg></div>
<div class="a om" style="left:1070px;top:562px;width:275px;height:19px"></div>
<span id="t85" class="t s8" style="left:1186.0px;top:567.93px;font-size:8px;line-height:12px;letter-spacing:-0.531px;">None</span>
<div class="a" style="left:1325px;top:570px;width:14px;height:4px;background:#fff;border-right:1px solid #000;border-bottom:1px solid #000;border-top:1px solid #f0f0f0;border-left:1px solid #f0f0f0"></div>
<svg class="a" style="left:1349px;top:562px;" width="11" height="21" viewBox="0 0 11 21"><rect x="0.5" y="1" width="10" height="8.5" fill="#fff" stroke="#d2d2d2"/><rect x="0.5" y="11.5" width="10" height="8.5" fill="#fff" stroke="#d2d2d2"/><path d="M2 6.8 L5.6 3 L9.2 6.8 Z M2 14.3 L9.2 14.3 L5.6 18 Z" fill="#000"/></svg>
<div class="a b21" style="left:1362px;top:562px;"><svg width="19" height="19" viewBox="0 0 19 19"><rect x="1.3" y="6.3" width="9.6" height="9.5" fill="#fff" stroke="#777" stroke-width=".8"/><rect x="3.2" y="4.3" width="9.6" height="9.5" fill="#fff" stroke="#777" stroke-width=".8"/><rect x="5.2" y="2.1" width="9.8" height="9.5" fill="#f8c264" stroke="#111" stroke-width="1.3"/><text x="7.2" y="10" font-family="Liberation Sans, sans-serif" font-weight="bold" font-size="8.2" fill="#000">B</text><path d="M12 15.3 H16.9 L14.5 18 Z" fill="#4a4a4a"/></svg></div>
<div class="a om" style="left:1385px;top:562px;width:275px;height:19px"></div>
<span id="t86" class="t s8" style="left:1490.0px;top:567.93px;font-size:8px;line-height:12px;letter-spacing:-0.312px;">MR_4...dcm</span>
<div class="a" style="left:1640px;top:570px;width:14px;height:4px;background:#fff;border-right:1px solid #000;border-bottom:1px solid #000;border-top:1px solid #f0f0f0;border-left:1px solid #f0f0f0"></div>
<svg class="a" style="left:1664px;top:562px;" width="11" height="21" viewBox="0 0 11 21"><rect x="0.5" y="1" width="10" height="8.5" fill="#fff" stroke="#d2d2d2"/><rect x="0.5" y="11.5" width="10" height="8.5" fill="#fff" stroke="#d2d2d2"/><path d="M2 6.8 L5.6 3 L9.2 6.8 Z M2 14.3 L9.2 14.3 L5.6 18 Z" fill="#000"/></svg>
<div class="a b21" style="left:1047px;top:585px;"><svg width="19" height="19" viewBox="0 0 19 19"><path d="M8.5 7.5 A4.6 4.6 0 1 0 10.9 14.1" fill="none" stroke="#1c1c1c" stroke-width="2.1"/><circle cx="12.6" cy="7.4" r="4.4" fill="none" stroke="#1c1c1c" stroke-width="2"/><path d="M7.6 7.2 L10.6 10.6 M6.4 8.6 L9.4 12 M8.9 6 L11.8 9.4" stroke="#8a8a8a" stroke-width=".9"/></svg></div>
<div class="a b21" style="left:1070px;top:585px;"><svg width="19" height="19" viewBox="0 0 19 19"><path d="M4.3 7.4 Q9 0.2 15.5 6.8" fill="none" stroke="#a0a0a0" stroke-width=".9"/><path d="M1.6 8 H4 Q9.3 15 14.6 8 H16.8" fill="none" stroke="#111" stroke-width="1.2"/><path d="M4.8 10.6 L3.2 12.6 M7 11.9 L6.2 14.2 M9.4 12.4 L9.4 14.8 M11.8 11.9 L12.6 14.2 M13.9 10.6 L15.4 12.4" stroke="#8c8c8c" stroke-width=".9"/></svg></div>
<div class="a b21" style="left:1093px;top:585px;"><svg width="19" height="19" viewBox="0 0 19 19"><circle cx="5.5" cy="8.4" r="1.25" fill="#fff" stroke="#111" stroke-width="1"/><circle cx="9.6" cy="8.4" r="1.25" fill="#fff" stroke="#5a5a5a" stroke-width="1"/><circle cx="13.6" cy="8.4" r="1.25" fill="#fff" stroke="#b4b4b4" stroke-width="1"/><path d="M7 12.1 H11.9 L9.45 14.9 Z" fill="#3c3c3c"/></svg></div>
<div class="a" style="left:1117px;top:586px;width:501px;height:16px;background:#adadad;border-top:1px solid #303030;border-left:1px solid #303030"></div>
<div class="a" style="left:1353px;top:588px;width:29px;height:13px;background:#fff;border-right:1px solid #000;border-bottom:1px solid #000;box-shadow:inset 1px 1px 0 #e4e4e4"></div>
<div class="a" style="left:1367px;top:588px;width:1px;height:14px;background:#000"></div>
<div class="a" style="left:1117px;top:605px;width:503px;height:1px;background:#e4e4e4"></div>
<div class="a sk" style="left:1622px;top:584px;width:52px;height:20px;background:#fff"></div>
<span id="t87" class="t" style="left:1625.0px;top:588.19px;font-size:11px;line-height:15px;">-30.831</span>
<div class="a" style="left:1046px;top:607px;width:630px;height:370px;background:#e4e8d8"></div>
<div class="a" style="left:1046px;top:607px;width:630px;height:1px;background:#b4b4ae"></div>
<div class="a" style="left:1046px;top:607px;width:1px;height:370px;background:#c0c0b8"></div>
<div class="a" style="left:1047px;top:608px;width:629px;height:1px;background:#fbfbf6"></div>
<div class="a" style="left:1048px;top:609px;width:628px;height:368px;background:#cfe4c0"></div>
<div class="a" style="left:1048px;top:609px;width:628px;height:3px;background:#74b054"></div>
<div class="a" style="left:1049px;top:612px;width:626px;height:365px;background:#000"></div>
<svg class="a" style="left:0;top:0" width="0" height="0"><defs><filter id="nz" x="0" y="0" width="100%" height="100%" color-interpolation-filters="sRGB"><feTurbulence type="fractalNoise" baseFrequency="0.3" numOctaves="2" seed="7" result="t"/><feColorMatrix type="matrix" values="1.05 0 0 0 -0.31  1.05 0 0 0 -0.31  1.05 0 0 0 -0.31  0 0 0 0 1"/></filter><filter id="nz2" x="0" y="0" width="100%" height="100%" color-interpolation-filters="sRGB"><feTurbulence type="fractalNoise" baseFrequency="0.3" numOctaves="2" seed="23" result="t"/><feColorMatrix type="matrix" values="1.0 0 0 0 -0.325  1.0 0 0 0 -0.325  1.0 0 0 0 -0.325  0 0 0 0 1"/></filter><filter id="bl" x="-50%" y="-50%" width="200%" height="200%"><feGaussianBlur stdDeviation="1"/></filter><filter id="bl2" x="-50%" y="-50%" width="200%" height="200%"><feGaussianBlur stdDeviation="0.6"/></filter></defs></svg>
<svg class="a" style="left:710px;top:164px;" width="39" height="362" viewBox="0 0 39 362"><rect width="39" height="362" filter="url(#nz2)"/><rect x="0" y="180.5" width="39" height="1.6" fill="#cfcfcf" opacity=".75" filter="url(#bl2)"/></svg>
<span id="t88" class="t" style="left:419.4px;top:162.45px;font-size:14px;line-height:18px;color:#fff;letter-spacing:0.084px;">Bg I: 128</span>
<span id="t89" class="t" style="left:419.4px;top:177.35px;font-size:14px;line-height:18px;color:#fff;letter-spacing:0.160px;">Bg J: 128</span>
<span id="t90" class="t" style="left:419.4px;top:192.25px;font-size:14px;line-height:18px;color:#fff;letter-spacing:0.164px;">Bg K: -152</span>
<span id="t91" class="t" style="left:950.6px;top:192.25px;font-size:14px;line-height:18px;color:#fff;letter-spacing:0.449px;">Sp: 0.938mm</span>
<span id="t92" class="t" style="left:419.4px;top:481.35px;font-size:14px;line-height:18px;color:#fff;letter-spacing:0.846px;">Lb: None</span>
<span id="t93" class="t" style="left:419.4px;top:496.35px;font-size:14px;line-height:18px;color:#fff;letter-spacing:0.751px;">Fg: None</span>
<span id="t94" class="t" style="left:419.4px;top:511.35px;font-size:14px;line-height:18px;color:#fff;letter-spacing:0.895px;">Bg: Out of Frame</span>
<span id="t95" class="t" style="left:981.0px;top:481.35px;font-size:14px;line-height:18px;color:#fff;letter-spacing:0.023px;">R: -159.8</span>
<span id="t96" class="t" style="left:987.7px;top:496.35px;font-size:14px;line-height:18px;color:#fff;letter-spacing:0.259px;">A: -31.3</span>
<span id="t97" class="t" style="left:991.3px;top:511.35px;font-size:14px;line-height:18px;color:#fff;letter-spacing:-0.191px;">S: -56.9</span>
<svg class="a" style="left:545px;top:612px;" width="369" height="362" viewBox="0 0 369 362"><rect width="369" height="362" filter="url(#nz)"/><path d="M35.5 0 H126.9 Q120.5 8 119.5 19 Q120.5 30 122.5 38.2 Q125.5 50 126.9 60.3 Q129.5 72 129.8 82.4 V123.7 Q110 127.4 90.8 126.6 Q62 124.6 37 117.8 Z" fill="#fff"/><path d="M17.1 24.2 Q20.4 25 21.4 33 Q22.6 44 27.4 57.4 Q26 66 18.6 72.6 Q14.2 76 12.7 75 Q10 71 9.4 62 Q8.6 48 11 36 Q13.4 25.6 17.1 24.2 Z" fill="#fff"/><path d="M138.2 28 Q141.4 26.6 143.4 29.6 Q146 40 146.8 50 Q146 55.4 142.4 55.6 Q138.8 54.6 137.6 48 Q135 36 138.2 28 Z" fill="#fff"/><path d="M171.1 0 H188 L187.4 125.4 H183 L182.4 128 L181 124.6 H175.6 Z" fill="#fff"/><path d="M64.5 120.5 h1.6 v1.8 h-1.6z M112 104 h1.4 v1.2 h-1.4z M122 118 h2 v1.2 h-2z" fill="#555"/><path d="M177.2 232 L180 230.6 L182.6 236 L186.2 248 L186.6 256.6 L183.6 258 L179.6 252 L175.8 242 Z" fill="#fff" opacity=".9" filter="url(#bl)"/><path d="M235.4 211.4 L239.6 211 L246.6 224.6 L244.4 228 L240 222 Z" fill="#e8e8e8" opacity=".85" filter="url(#bl)"/><path d="M281 254.6 L286 252.6 L304 265.4 L301.6 270 Z" fill="#d0d0d0" opacity=".8" filter="url(#bl)"/><path d="M133.6 41.5 H147.4 M140.2 34.5 V48.5 M136 37 L144.6 46 M144.6 37 L136 46" stroke="#d8d8d8" stroke-width=".5"/><path d="M174 245.4 H188.6 M181.2 238.4 V252.4 M176.6 240.8 L185.8 250 M185.8 240.8 L176.6 250" stroke="#d8d8d8" stroke-width=".5"/></svg>
<span id="t98" class="t" style="left:696.2px;top:631.20px;font-size:13px;line-height:17px;color:#c2c2c2;letter-spacing:0.135px;">Marker_1</span>
<span id="t99" class="t" style="left:735.0px;top:835.00px;font-size:13px;line-height:17px;color:#c4c4c4;letter-spacing:0.297px;">Marker_2</span>
<svg class="a" style="left:1344px;top:612px;" width="39" height="363" viewBox="0 0 39 363"><rect y="126" width="39" height="237" filter="url(#nz2)"/><rect width="39" height="126" fill="#fff"/><rect x="0" y="180.7" width="39" height="1.6" fill="#d8d8d8" opacity=".8" filter="url(#bl2)"/><path d="M17 238 L20 236 L22 250 L20 258 L17 252 Z" fill="#f4f4f4" opacity=".9" filter="url(#bl)"/><path d="M17 40 v3 M19 81 h2 M12 100 h3 M8 118 h5 M20 112 h2" stroke="#999" stroke-width=".7"/></svg>
<div class="a" style="left:1044px;top:83px;width:630px;height:444px;background:#b3b3e6;border:2px solid #4a0a82"></div>
<svg class="a" style="left:1044px;top:83px;" width="634" height="448" viewBox="0 0 634 448"><path d="M231.9 30.9 L529.3 63.4 M529.3 63.4 L367.6 105.4 M367.6 105.4 L133.0 89.0 M133.0 89.0 L231.9 30.9 M234.5 416.3 L532.0 381.0 M532.0 381.0 L369.2 342.6 M369.2 342.6 L134.4 361.4 M134.4 361.4 L234.5 416.3 M231.9 30.9 L234.5 416.3 M529.3 63.4 L532.0 381.0 M367.6 105.4 L369.2 342.6 M133.0 89.0 L134.4 361.4" stroke="#f21cf2" stroke-width="1.15" fill="none"/><path d="M309.0 166.4 L339.6 352.8 M297.3 242.1 L425.4 359.8" stroke="#fff" stroke-width="1" fill="none"/><path d="M306.3 166.4 L309.0 163.1 L311.7 166.4 L309.0 169.7 Z" fill="#3a3a4e"/><path d="M336.9 352.8 L339.6 349.5 L342.3 352.8 L339.6 356.1 Z" fill="#3a3a4e"/><path d="M387.2 327.4 L389.9 324.1 L392.6 327.4 L389.9 330.7 Z" fill="#3a3a4e"/><path d="M422.7 359.8 L425.4 356.5 L428.1 359.8 L425.4 363.1 Z" fill="#3a3a4e"/></svg>
<svg class="a" style="left:1044px;top:83px;" width="634" height="448" viewBox="0 0 634 448"><text x="325.5" y="48.9" font-size="24.2" text-anchor="middle" fill="#fff" font-family="Liberation Sans, sans-serif">S</text><text x="154.5" y="226.3" font-size="24.5" text-anchor="middle" fill="#fff" font-family="Liberation Sans, sans-serif">A</text><text x="258.9" y="226.3" font-size="20" text-anchor="middle" fill="#fff" font-family="Liberation Sans, sans-serif">R</text><text x="426.2" y="225.0" font-size="30" text-anchor="middle" fill="#fff" font-family="Liberation Sans, sans-serif">L</text><text x="469.0" y="223.6" font-size="20" text-anchor="middle" fill="#fff" font-family="Liberation Sans, sans-serif">P</text><text x="324.0" y="400.9" font-size="21" text-anchor="middle" fill="#fff" font-family="Liberation Sans, sans-serif">I</text></svg>
<span id="t100" class="t" style="left:1360.6px;top:240.09px;font-size:11px;line-height:15px;color:#8386a4;letter-spacing:0.441px;">Marker_1</span>
<span id="t101" class="t" style="left:1390.7px;top:426.09px;font-size:11px;line-height:15px;color:#8386a4;letter-spacing:0.504px;">Marker_2</span>
<span id="t102" class="t" style="left:1440.7px;top:401.09px;font-size:11px;line-height:15px;color:#8386a4;letter-spacing:0.354px;">Marker_3</span>
<span id="t103" class="t" style="left:1477.0px;top:433.19px;font-size:11px;line-height:15px;color:#8386a4;letter-spacing:0.066px;">Marker_4</span>
</div>
</body></html>
